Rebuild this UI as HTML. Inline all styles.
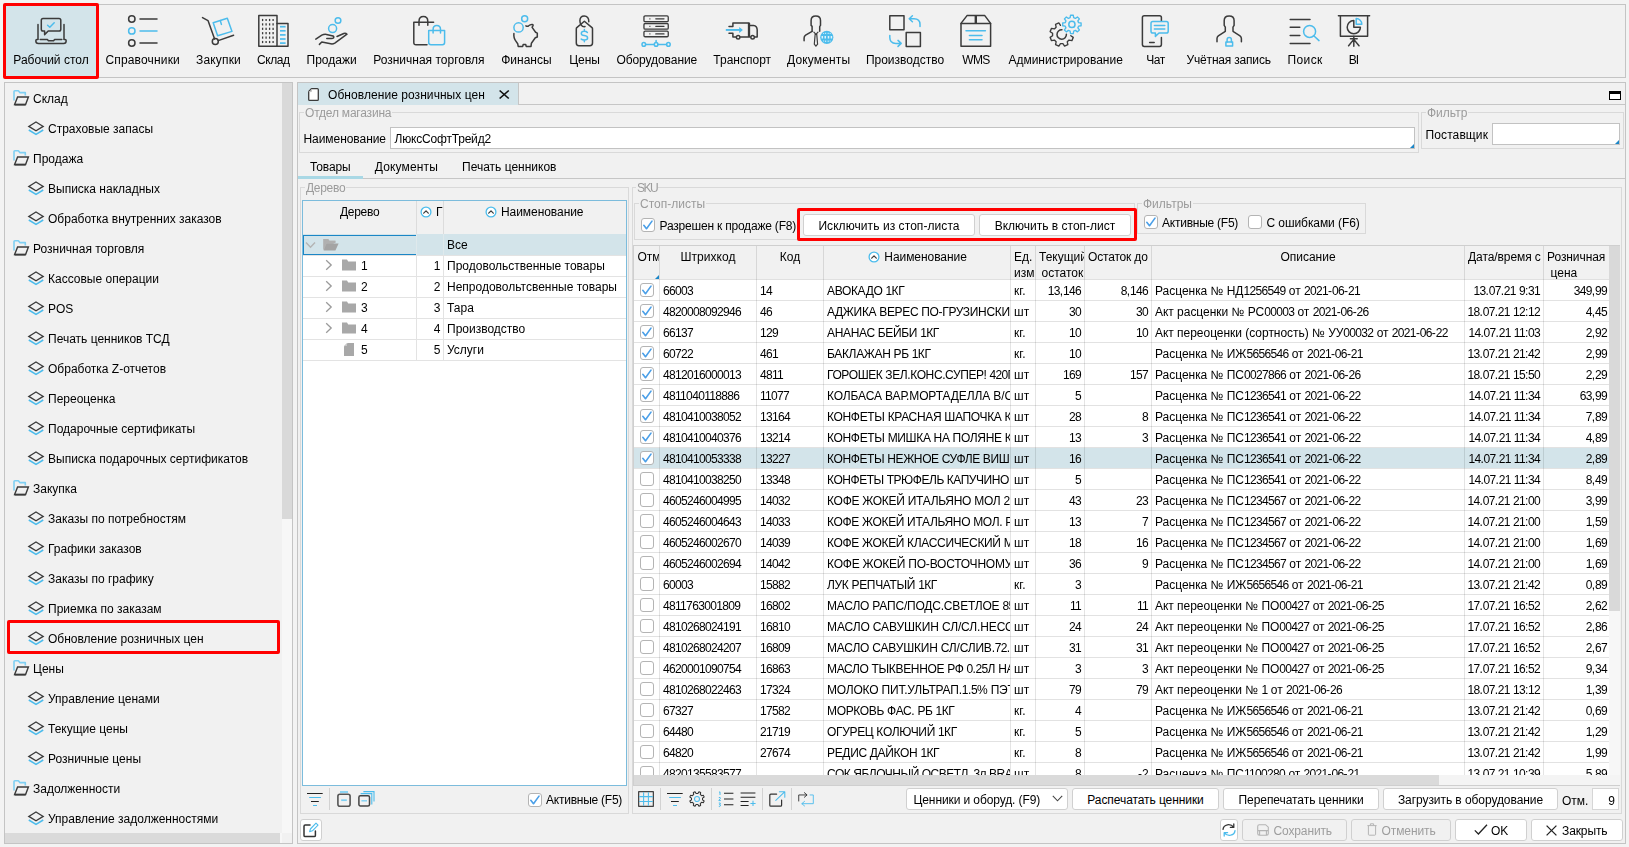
<!DOCTYPE html>
<html lang="ru"><head><meta charset="utf-8"><title>UI</title><style>
*{box-sizing:border-box;margin:0;padding:0}
html,body{width:1629px;height:847px;overflow:hidden;background:#f3f3f3}
body{font-family:"Liberation Sans",sans-serif;font-size:12px;color:#000;position:relative}
.a{position:absolute}
.t{position:absolute;white-space:nowrap;line-height:14px;height:14px}
.box{position:absolute;border:1px solid #c4c4c4;background:#f1f1f1}
.grp{position:absolute;border:1px solid #d9d9d9}
.gl{position:absolute;white-space:nowrap;line-height:14px;height:14px;color:#9b9b9b;background:#f1f1f1;padding:0 1px}
svg{position:absolute;overflow:visible}
.s{fill:none;stroke:#3b3b3b;stroke-width:1.5;stroke-linecap:round;stroke-linejoin:round}
.b{fill:none;stroke:#4cbcec;stroke-width:1.5;stroke-linecap:round;stroke-linejoin:round}
.cb{position:absolute;width:14px;height:14px;border:1px solid #b4b4b4;border-radius:3px;background:#fff}
.d{letter-spacing:-.67px}
.btn{position:absolute;border:1px solid #d0d0d0;border-radius:3px;background:#fff;text-align:center;white-space:nowrap}
</style></head><body>
<div class="box" style="left:4px;top:4px;width:1622px;height:74px"></div>
<div class="a" style="left:3px;top:3px;width:96px;height:76px;background:#d3e4ea;border:3px solid #ff0000;border-radius:2px"></div>
<svg style="left:35.0px;top:15px" width="32" height="32" viewBox="0 0 32 32"><path class="s" d="M3 9.5V24.3M29 9.5V24.3"/><path class="s" d="M2.8 24.6H2Q0.8 24.6 0.8 25.8Q0.8 28.6 3.4 28.6H28.6Q31.2 28.6 31.2 25.8Q31.2 24.6 30 24.6H29.2M5.2 24.6H12.4L13.4 25.8H18.6L19.6 24.6H26.8"/><path class="s" d="M8 3.4H24Q25.8 3.4 25.8 5.2V14.2Q25.8 16 24 16H13.2L9.6 19.6V16H8Q6.3 16 6.3 14.2V5.2Q6.3 3.4 8 3.4Z"/><path class="b" d="M12.6 10.2L14.8 12.2L19.2 7.8"/></svg><div class="t" style="left:-49.0px;top:53px;width:200px;text-align:center;letter-spacing:0.00px">Рабочий стол</div>
<svg style="left:126.6px;top:15px" width="32" height="32" viewBox="0 0 32 32"><circle class="s" cx="4.8" cy="4" r="3.2"/><path class="s" d="M13 4H30"/><circle class="b" cx="4.8" cy="15.9" r="3.2"/><path class="b" d="M13 15.9H30"/><circle class="s" cx="4.8" cy="28" r="3.2"/><path class="s" d="M13 28H30"/></svg><div class="t" style="left:42.7px;top:53px;width:200px;text-align:center;letter-spacing:0.17px">Справочники</div>
<svg style="left:202.4px;top:15px" width="32" height="32" viewBox="0 0 32 32"><path class="s" d="M0.5 2.6L6 5.6L12.6 24"/><circle class="s" cx="13.3" cy="26.6" r="3"/><path class="s" d="M16.2 25.6L31.6 20.3"/><path class="b" d="M11.2 7.8L25.3 3.3L30 16.4L15.6 20.8Z"/><path class="b" d="M18.3 5.6L19.4 9.4"/></svg><div class="t" style="left:118.5px;top:53px;width:200px;text-align:center;letter-spacing:0.15px">Закупки</div>
<svg style="left:257.6px;top:15px" width="32" height="32" viewBox="0 0 32 32"><path class="s" d="M0.8 0.6H19V31.3H0.8Z"/><path class="s" d="M19 8.4H30V31.3H19"/><path d="M4.6 3.9v2.2" stroke="#3b3b3b" stroke-width="1.3" fill="none"/><path d="M8.1 3.9v2.2" stroke="#3b3b3b" stroke-width="1.3" fill="none"/><path d="M11.6 3.9v2.2" stroke="#3b3b3b" stroke-width="1.3" fill="none"/><path d="M15.1 3.9v2.2" stroke="#3b3b3b" stroke-width="1.3" fill="none"/><path d="M4.6 8.3v2.2" stroke="#3b3b3b" stroke-width="1.3" fill="none"/><path d="M8.1 8.3v2.2" stroke="#3b3b3b" stroke-width="1.3" fill="none"/><path d="M11.6 8.3v2.2" stroke="#3b3b3b" stroke-width="1.3" fill="none"/><path d="M15.1 8.3v2.2" stroke="#3b3b3b" stroke-width="1.3" fill="none"/><path d="M4.6 12.7v2.2" stroke="#3b3b3b" stroke-width="1.3" fill="none"/><path d="M8.1 12.7v2.2" stroke="#3b3b3b" stroke-width="1.3" fill="none"/><path d="M11.6 12.7v2.2" stroke="#3b3b3b" stroke-width="1.3" fill="none"/><path d="M15.1 12.7v2.2" stroke="#3b3b3b" stroke-width="1.3" fill="none"/><path d="M4.6 17.1v2.2" stroke="#3b3b3b" stroke-width="1.3" fill="none"/><path d="M8.1 17.1v2.2" stroke="#3b3b3b" stroke-width="1.3" fill="none"/><path d="M11.6 17.1v2.2" stroke="#3b3b3b" stroke-width="1.3" fill="none"/><path d="M15.1 17.1v2.2" stroke="#3b3b3b" stroke-width="1.3" fill="none"/><path d="M4.6 21.5v2.2" stroke="#3b3b3b" stroke-width="1.3" fill="none"/><path d="M8.1 21.5v2.2" stroke="#3b3b3b" stroke-width="1.3" fill="none"/><path d="M11.6 21.5v2.2" stroke="#3b3b3b" stroke-width="1.3" fill="none"/><path d="M15.1 21.5v2.2" stroke="#3b3b3b" stroke-width="1.3" fill="none"/><path d="M4.6 25.9v2.2" stroke="#3b3b3b" stroke-width="1.3" fill="none"/><path d="M8.1 25.9v2.2" stroke="#3b3b3b" stroke-width="1.3" fill="none"/><path d="M11.6 25.9v2.2" stroke="#3b3b3b" stroke-width="1.3" fill="none"/><path d="M15.1 25.9v2.2" stroke="#3b3b3b" stroke-width="1.3" fill="none"/><path d="M22 11.7H27.6" stroke="#4cbcec" stroke-width="1.7" fill="none"/><path d="M22 15.8H27.6" stroke="#4cbcec" stroke-width="1.7" fill="none"/><path d="M22 19.9H27.6" stroke="#4cbcec" stroke-width="1.7" fill="none"/><path d="M22 24.0H27.6" stroke="#4cbcec" stroke-width="1.7" fill="none"/><path d="M22 28.1H27.6" stroke="#4cbcec" stroke-width="1.7" fill="none"/></svg><div class="t" style="left:173.4px;top:53px;width:200px;text-align:center;letter-spacing:-0.43px">Склад</div>
<svg style="left:315.6px;top:15px" width="32" height="32" viewBox="0 0 32 32"><circle class="b" cx="22" cy="5.5" r="2.85"/><circle class="b" cx="16.6" cy="13.6" r="4"/><path class="s" d="M-0.2 24.2L5.8 20.1Q8 19.1 10.5 19.4L17 21Q18.2 21.6 17.6 22.8Q17 23.6 15.6 23.6H10.8"/><path class="s" d="M21 21.5L27.8 18.5Q29.8 18 31 19.2L18.8 28.2Q17.4 29 16 29L5.8 27L3.4 29.4"/></svg><div class="t" style="left:231.6px;top:53px;width:200px;text-align:center;letter-spacing:0.00px">Продажи</div>
<svg style="left:412.9px;top:15px" width="32" height="32" viewBox="0 0 32 32"><path class="s" d="M14 29.8H3Q0.8 29.8 0.8 27.6V7.2H20.6"/><path class="s" d="M6 10.2V6.4Q6 1.6 10.4 1.6Q14.8 1.6 14.8 6.4V10.2"/><path class="b" d="M15.7 15.6H31.6V27.6Q31.6 29.8 29.4 29.8H17.9Q15.7 29.8 15.7 27.6Z"/><path class="b" d="M20.1 18V14.4Q20.1 10.6 23.8 10.6Q27.5 10.6 27.5 14.4V18"/></svg><div class="t" style="left:328.9px;top:53px;width:200px;text-align:center;letter-spacing:0.00px">Розничная торговля</div>
<svg style="left:510.4px;top:15px" width="32" height="32" viewBox="0 0 32 32"><circle class="b" cx="14.66" cy="3.7" r="3"/><circle class="b" cx="8.56" cy="12.46" r="4.65"/><path class="s" d="M15.9 10.8Q17.4 11.8 18.6 10.8Q20.4 9.2 22.3 9.4Q23.4 9.6 23 10.6L22.1 12.4L25.6 17.3L27.3 18.1V22L25.3 22.8L21.4 28.2L21 31.4H16.2L15.7 29.5H13.2L12.7 31.4H8.2L7.7 28.7Q4.4 24.4 4.1 22.4Q3.7 20.4 3.9 18.6"/></svg><div class="t" style="left:426.4px;top:53px;width:200px;text-align:center;letter-spacing:0.00px">Финансы</div>
<svg style="left:568.6px;top:15px" width="32" height="32" viewBox="0 0 32 32"><path class="s" d="M15.36 6.2L23 12.6Q23.5 13.1 23.5 13.8V28Q23.5 30.7 20.8 30.7H9.9Q7.3 30.7 7.3 28V13.8Q7.3 13.1 7.8 12.6Z"/><path class="s" d="M19.8 6.7C20 3 18 0.95 15.3 0.95C12.4 0.95 10.9 3.2 10.9 5.8C10.9 8.6 12.6 11.8 15.2 11.8L16 11.6"/><path class="b" d="M18.4 17.4Q17.4 16.2 15.3 16.2Q12.3 16.2 12.3 18.4Q12.3 20.2 15.3 20.6Q18.6 21 18.6 23Q18.6 25 15.3 25Q13 25 12.2 24M15.36 14.6V16.2M15.36 25V26.7"/></svg><div class="t" style="left:484.5px;top:53px;width:200px;text-align:center;letter-spacing:-0.13px">Цены</div>
<svg style="left:640.8px;top:15px" width="32" height="32" viewBox="0 0 32 32"><g style="stroke-width:1.3"><rect class="s" style="stroke-width:1.3" x="2.95" y="0.95" width="24.3" height="5.7" rx="1.2"/><rect class="s" style="stroke-width:1.3" x="2.95" y="8.5" width="24.3" height="5.7" rx="1.2"/><rect class="s" style="stroke-width:1.3" x="2.95" y="16.05" width="24.3" height="5.7" rx="1.2"/></g><path class="s" style="stroke-width:1.3" d="M14.8 3.8H23M14.8 11.35H23M14.8 18.9H23"/><path d="M8.4 3.8h1M8.4 11.35h1M8.4 18.9h1" stroke="#3b3b3b" stroke-width="1.2" fill="none"/><path class="b" d="M4.6 29.4H13.2M17 29.4H25.6M15.1 27.4V25.4"/><circle class="b" cx="2.8" cy="29.4" r="1.8"/><circle class="b" cx="15.1" cy="29.4" r="1.8"/><circle class="b" cx="27.4" cy="29.4" r="1.8"/></svg><div class="t" style="left:556.8px;top:53px;width:200px;text-align:center;letter-spacing:-0.07px">Оборудование</div>
<svg style="left:726.2px;top:15px" width="32" height="32" viewBox="0 0 32 32"><path class="s" d="M3 11.4H6.9V7.9H23M3 18.2H6.9V22H9.9M14.5 22H24.2M29 22H31.2V14.8Q31 10.6 27.6 10.4H23"/><path d="M23 7.9V22" stroke="#3b3b3b" stroke-width="2.3" fill="none"/><circle class="s" cx="12.13" cy="22.2" r="1.75"/><circle class="s" cx="26.6" cy="22.2" r="1.75"/><path d="M-0.2 14.95H14" stroke="#4cbcec" stroke-width="1.9" fill="none"/><path d="M13.2 11.9L16.9 14.95L13.2 18Z" fill="#4cbcec"/></svg><div class="t" style="left:642.2px;top:53px;width:200px;text-align:center;letter-spacing:0.00px">Транспорт</div>
<svg style="left:802.5px;top:15px" width="32" height="32" viewBox="0 0 32 32"><path class="s" d="M9.1 16.3V11.4L8.1 10.4V5.4Q8.1 0.9 12.8 0.9Q17.5 0.9 17.5 5.4V10.4L16.7 11.6V16.3"/><path class="s" d="M9.1 16.3L2.6 20.2Q1.1 21.2 1.1 23V25.7"/><path class="s" style="stroke-width:1.2" d="M10.9 17.2L12.9 19.4L15 17.2M12.2 18.8L11.3 29.2L12.9 31.2L14.6 29.2L13.7 18.8"/><circle cx="23.8" cy="22.3" r="6.6" fill="#4cbcec"/><path d="M19.3 21V23.6M22.25 21V23.6M25.5 21V23.6M28.4 21V23.6" stroke="#dff2fb" stroke-width="1.5" fill="none"/><path d="M20.6 18.1V19M22.6 17.7V19M25.2 17.7V19M27.2 18.1V19M20.6 25.6V26.5M22.6 25.6V26.9M25.2 25.6V26.9M27.2 25.6V26.5" stroke="#bfe6f8" stroke-width="1.2" fill="none"/></svg><div class="t" style="left:718.6px;top:53px;width:200px;text-align:center;letter-spacing:0.14px">Документы</div>
<svg style="left:889.0px;top:15px" width="32" height="32" viewBox="0 0 32 32"><rect class="s" x="0.8" y="0.8" width="14.2" height="14"/><rect class="s" x="17.2" y="17.4" width="14.2" height="14"/><path class="b" d="M31 11.6V9.6Q31 3.8 25 3.8H20.4M23.4 0.8L20.2 3.8L23.4 6.8"/><path class="b" d="M0.8 20.6V22.6Q0.8 28.4 6.8 28.4H12M9 25.4L12.2 28.4L9 31.4"/></svg><div class="t" style="left:805.0px;top:53px;width:200px;text-align:center;letter-spacing:0.00px">Производство</div>
<svg style="left:960.3px;top:15px" width="32" height="32" viewBox="0 0 32 32"><path class="s" d="M1 8.4H30.6V31.2H1Z"/><path class="s" d="M1 8.4L7 0.6H24.8L30.6 8.4"/><path d="M15.8 0.6V8.4" stroke="#3b3b3b" stroke-width="2.4" fill="none"/><path class="b" d="M6 15.8H25.4M9.4 20.4H22M9.4 24.8H22"/></svg><div class="t" style="left:876.0px;top:53px;width:200px;text-align:center;letter-spacing:-0.58px">WMS</div>
<svg style="left:1049.6px;top:15px" width="32" height="32" viewBox="0 0 32 32"><path class="s" style="stroke-width:1.35" d="M20.82 20.72L23.25 22.37L21.89 25.64L19.01 25.08L17.28 26.81L17.84 29.69L14.57 31.05L12.92 28.62L10.48 28.62L8.83 31.05L5.56 29.69L6.12 26.81L4.39 25.08L1.51 25.64L0.15 22.37L2.58 20.72L2.58 18.28L0.15 16.63L1.51 13.36L4.39 13.92L6.12 12.19L5.56 9.31L8.83 7.95L10.48 10.38"/><path class="s" d="M11.95 14.81A4.7 4.7 0 1 0 16.39 19.25"/><path class="b" style="stroke-width:1.35" d="M28.57 7.63L31.10 8.02L31.10 10.78L28.57 11.17L27.87 12.87L29.38 14.93L27.43 16.88L25.37 15.37L23.67 16.07L23.28 18.60L20.52 18.60L20.13 16.07L18.43 15.37L16.37 16.88L14.42 14.93L15.93 12.87L15.23 11.17L12.70 10.78L12.70 8.02L15.23 7.63L15.93 5.93L14.42 3.87L16.37 1.92L18.43 3.43L20.13 2.73L20.52 0.20L23.28 0.20L23.67 2.73L25.37 3.43L27.43 1.92L29.38 3.87L27.87 5.93Z"/><circle class="b" cx="21.9" cy="9.4" r="3.1"/></svg><div class="t" style="left:965.6px;top:53px;width:200px;text-align:center;letter-spacing:0.00px">Администрирование</div>
<svg style="left:1139.8px;top:15px" width="32" height="32" viewBox="0 0 32 32"><path class="s" d="M21.4 6V2.6Q21.4 0.8 19.6 0.8H4.2Q2.4 0.8 2.4 2.6V29.6Q2.4 31.4 4.2 31.4H19.6Q21.4 31.4 21.4 29.6V22.6"/><path class="s" d="M9.6 27.4H14.2"/><path class="b" d="M12.8 6.4H26.4Q28.2 6.4 28.2 8.2V16.2Q28.2 18 26.4 18H19L15.4 21.4V18H12.8Q11 18 11 16.2V8.2Q11 6.4 12.8 6.4Z"/><path class="b" d="M14.4 10.6H24.8M14.4 14H24.8"/></svg><div class="t" style="left:1055.6px;top:53px;width:200px;text-align:center;letter-spacing:-0.44px">Чат</div>
<svg style="left:1212.8px;top:15px" width="32" height="32" viewBox="0 0 32 32"><path class="s" d="M12.3 16.3V12.1L11.2 10.4V5.6Q11.2 0.9 16.15 0.9Q21.1 0.9 21.1 5.6V10.4L20 12.1V16.3L27 20.8Q28.4 21.8 28.4 23.6V26.7M12.3 16.3L5.3 20.8Q4 21.8 4 23.6V26.7"/><rect class="b" x="12.9" y="27.1" width="6.7" height="3.9"/><path class="b" d="M14.1 27V24.8Q14.1 22.6 16.25 22.6Q18.4 22.6 18.4 24.8V27"/></svg><div class="t" style="left:1128.7px;top:53px;width:200px;text-align:center;letter-spacing:-0.19px">Учётная запись</div>
<svg style="left:1288.9px;top:15px" width="32" height="32" viewBox="0 0 32 32"><path class="s" d="M1.2 4.4H21M1.2 12.3H10.8M1.2 20.6H10.8M1.2 28.4H21"/><circle class="b" cx="20.6" cy="16.4" r="6"/><path class="b" d="M25 21L30 25.6"/></svg><div class="t" style="left:1205.1px;top:53px;width:200px;text-align:center;letter-spacing:0.35px">Поиск</div>
<svg style="left:1338.0px;top:15px" width="32" height="32" viewBox="0 0 32 32"><path class="s" d="M0.4 0.8H31.6M2.4 0.8V21.2H29.6V0.8"/><path class="s" d="M15.8 5.6A6.6 6.6 0 1 0 22.4 12.2H15.8Z"/><path class="b" d="M18.2 3.6A5.6 5.6 0 0 1 23.8 9.2H18.2Z"/><path class="s" d="M15.8 21.2V31.2M12.4 23.8H19.2M15.8 24.4L10.6 30.8M15.8 24.4L21 30.8"/></svg><div class="t" style="left:1253.5px;top:53px;width:200px;text-align:center;letter-spacing:-1.00px">BI</div>
<div class="box" style="left:4px;top:82px;width:289px;height:762px"></div>
<div class="a" style="left:282px;top:83px;width:10px;height:750px;background:#f7f7f7"></div><div class="a" style="left:282px;top:83px;width:10px;height:436px;background:#d9d9d9"></div><div class="a" style="left:5px;top:833px;width:277px;height:10px;background:#f7f7f7"></div><div class="a" style="left:5px;top:833px;width:275px;height:10px;background:#dadada"></div>
<svg style="left:13px;top:90px" width="16" height="16" viewBox="0 0 16 16"><path d="M1 10.6V1.6Q1 0.8 1.8 0.8H5.4L6.8 2.6H12.3V5.6" fill="none" stroke="#7fd0f3" stroke-width="1.6" stroke-linejoin="round"/><path d="M4.6 7H15.4L12.6 14.6H1.6Z" fill="none" stroke="#3b3b3b" stroke-width="1.4" stroke-linejoin="miter"/><path d="M1.6 14.6H12.6" stroke="#3b3b3b" stroke-width="1.9" fill="none"/></svg><div class="t" style="left:33px;top:92px">Склад</div>
<svg style="left:28px;top:121px" width="16" height="14" viewBox="0 0 16 14"><path d="M8 1L15.2 5.4L8 9.8L0.8 5.4Z" fill="none" stroke="#3b3b3b" stroke-width="1.3" stroke-linejoin="miter"/><path d="M0.8 9L8 13.4L15.2 9" fill="none" stroke="#4cbcec" stroke-width="1.5" stroke-linejoin="miter" stroke-linecap="butt"/></svg><div class="t" style="left:48px;top:122px">Страховые запасы</div>
<svg style="left:13px;top:150px" width="16" height="16" viewBox="0 0 16 16"><path d="M1 10.6V1.6Q1 0.8 1.8 0.8H5.4L6.8 2.6H12.3V5.6" fill="none" stroke="#7fd0f3" stroke-width="1.6" stroke-linejoin="round"/><path d="M4.6 7H15.4L12.6 14.6H1.6Z" fill="none" stroke="#3b3b3b" stroke-width="1.4" stroke-linejoin="miter"/><path d="M1.6 14.6H12.6" stroke="#3b3b3b" stroke-width="1.9" fill="none"/></svg><div class="t" style="left:33px;top:152px">Продажа</div>
<svg style="left:28px;top:181px" width="16" height="14" viewBox="0 0 16 14"><path d="M8 1L15.2 5.4L8 9.8L0.8 5.4Z" fill="none" stroke="#3b3b3b" stroke-width="1.3" stroke-linejoin="miter"/><path d="M0.8 9L8 13.4L15.2 9" fill="none" stroke="#4cbcec" stroke-width="1.5" stroke-linejoin="miter" stroke-linecap="butt"/></svg><div class="t" style="left:48px;top:182px">Выписка накладных</div>
<svg style="left:28px;top:211px" width="16" height="14" viewBox="0 0 16 14"><path d="M8 1L15.2 5.4L8 9.8L0.8 5.4Z" fill="none" stroke="#3b3b3b" stroke-width="1.3" stroke-linejoin="miter"/><path d="M0.8 9L8 13.4L15.2 9" fill="none" stroke="#4cbcec" stroke-width="1.5" stroke-linejoin="miter" stroke-linecap="butt"/></svg><div class="t" style="left:48px;top:212px">Обработка внутренних заказов</div>
<svg style="left:13px;top:240px" width="16" height="16" viewBox="0 0 16 16"><path d="M1 10.6V1.6Q1 0.8 1.8 0.8H5.4L6.8 2.6H12.3V5.6" fill="none" stroke="#7fd0f3" stroke-width="1.6" stroke-linejoin="round"/><path d="M4.6 7H15.4L12.6 14.6H1.6Z" fill="none" stroke="#3b3b3b" stroke-width="1.4" stroke-linejoin="miter"/><path d="M1.6 14.6H12.6" stroke="#3b3b3b" stroke-width="1.9" fill="none"/></svg><div class="t" style="left:33px;top:242px">Розничная торговля</div>
<svg style="left:28px;top:271px" width="16" height="14" viewBox="0 0 16 14"><path d="M8 1L15.2 5.4L8 9.8L0.8 5.4Z" fill="none" stroke="#3b3b3b" stroke-width="1.3" stroke-linejoin="miter"/><path d="M0.8 9L8 13.4L15.2 9" fill="none" stroke="#4cbcec" stroke-width="1.5" stroke-linejoin="miter" stroke-linecap="butt"/></svg><div class="t" style="left:48px;top:272px">Кассовые операции</div>
<svg style="left:28px;top:301px" width="16" height="14" viewBox="0 0 16 14"><path d="M8 1L15.2 5.4L8 9.8L0.8 5.4Z" fill="none" stroke="#3b3b3b" stroke-width="1.3" stroke-linejoin="miter"/><path d="M0.8 9L8 13.4L15.2 9" fill="none" stroke="#4cbcec" stroke-width="1.5" stroke-linejoin="miter" stroke-linecap="butt"/></svg><div class="t" style="left:48px;top:302px">POS</div>
<svg style="left:28px;top:331px" width="16" height="14" viewBox="0 0 16 14"><path d="M8 1L15.2 5.4L8 9.8L0.8 5.4Z" fill="none" stroke="#3b3b3b" stroke-width="1.3" stroke-linejoin="miter"/><path d="M0.8 9L8 13.4L15.2 9" fill="none" stroke="#4cbcec" stroke-width="1.5" stroke-linejoin="miter" stroke-linecap="butt"/></svg><div class="t" style="left:48px;top:332px">Печать ценников ТСД</div>
<svg style="left:28px;top:361px" width="16" height="14" viewBox="0 0 16 14"><path d="M8 1L15.2 5.4L8 9.8L0.8 5.4Z" fill="none" stroke="#3b3b3b" stroke-width="1.3" stroke-linejoin="miter"/><path d="M0.8 9L8 13.4L15.2 9" fill="none" stroke="#4cbcec" stroke-width="1.5" stroke-linejoin="miter" stroke-linecap="butt"/></svg><div class="t" style="left:48px;top:362px">Обработка Z-отчетов</div>
<svg style="left:28px;top:391px" width="16" height="14" viewBox="0 0 16 14"><path d="M8 1L15.2 5.4L8 9.8L0.8 5.4Z" fill="none" stroke="#3b3b3b" stroke-width="1.3" stroke-linejoin="miter"/><path d="M0.8 9L8 13.4L15.2 9" fill="none" stroke="#4cbcec" stroke-width="1.5" stroke-linejoin="miter" stroke-linecap="butt"/></svg><div class="t" style="left:48px;top:392px">Переоценка</div>
<svg style="left:28px;top:421px" width="16" height="14" viewBox="0 0 16 14"><path d="M8 1L15.2 5.4L8 9.8L0.8 5.4Z" fill="none" stroke="#3b3b3b" stroke-width="1.3" stroke-linejoin="miter"/><path d="M0.8 9L8 13.4L15.2 9" fill="none" stroke="#4cbcec" stroke-width="1.5" stroke-linejoin="miter" stroke-linecap="butt"/></svg><div class="t" style="left:48px;top:422px">Подарочные сертификаты</div>
<svg style="left:28px;top:451px" width="16" height="14" viewBox="0 0 16 14"><path d="M8 1L15.2 5.4L8 9.8L0.8 5.4Z" fill="none" stroke="#3b3b3b" stroke-width="1.3" stroke-linejoin="miter"/><path d="M0.8 9L8 13.4L15.2 9" fill="none" stroke="#4cbcec" stroke-width="1.5" stroke-linejoin="miter" stroke-linecap="butt"/></svg><div class="t" style="left:48px;top:452px">Выписка подарочных сертификатов</div>
<svg style="left:13px;top:480px" width="16" height="16" viewBox="0 0 16 16"><path d="M1 10.6V1.6Q1 0.8 1.8 0.8H5.4L6.8 2.6H12.3V5.6" fill="none" stroke="#7fd0f3" stroke-width="1.6" stroke-linejoin="round"/><path d="M4.6 7H15.4L12.6 14.6H1.6Z" fill="none" stroke="#3b3b3b" stroke-width="1.4" stroke-linejoin="miter"/><path d="M1.6 14.6H12.6" stroke="#3b3b3b" stroke-width="1.9" fill="none"/></svg><div class="t" style="left:33px;top:482px">Закупка</div>
<svg style="left:28px;top:511px" width="16" height="14" viewBox="0 0 16 14"><path d="M8 1L15.2 5.4L8 9.8L0.8 5.4Z" fill="none" stroke="#3b3b3b" stroke-width="1.3" stroke-linejoin="miter"/><path d="M0.8 9L8 13.4L15.2 9" fill="none" stroke="#4cbcec" stroke-width="1.5" stroke-linejoin="miter" stroke-linecap="butt"/></svg><div class="t" style="left:48px;top:512px">Заказы по потребностям</div>
<svg style="left:28px;top:541px" width="16" height="14" viewBox="0 0 16 14"><path d="M8 1L15.2 5.4L8 9.8L0.8 5.4Z" fill="none" stroke="#3b3b3b" stroke-width="1.3" stroke-linejoin="miter"/><path d="M0.8 9L8 13.4L15.2 9" fill="none" stroke="#4cbcec" stroke-width="1.5" stroke-linejoin="miter" stroke-linecap="butt"/></svg><div class="t" style="left:48px;top:542px">Графики заказов</div>
<svg style="left:28px;top:571px" width="16" height="14" viewBox="0 0 16 14"><path d="M8 1L15.2 5.4L8 9.8L0.8 5.4Z" fill="none" stroke="#3b3b3b" stroke-width="1.3" stroke-linejoin="miter"/><path d="M0.8 9L8 13.4L15.2 9" fill="none" stroke="#4cbcec" stroke-width="1.5" stroke-linejoin="miter" stroke-linecap="butt"/></svg><div class="t" style="left:48px;top:572px">Заказы по графику</div>
<svg style="left:28px;top:601px" width="16" height="14" viewBox="0 0 16 14"><path d="M8 1L15.2 5.4L8 9.8L0.8 5.4Z" fill="none" stroke="#3b3b3b" stroke-width="1.3" stroke-linejoin="miter"/><path d="M0.8 9L8 13.4L15.2 9" fill="none" stroke="#4cbcec" stroke-width="1.5" stroke-linejoin="miter" stroke-linecap="butt"/></svg><div class="t" style="left:48px;top:602px">Приемка по заказам</div>
<svg style="left:28px;top:631px" width="16" height="14" viewBox="0 0 16 14"><path d="M8 1L15.2 5.4L8 9.8L0.8 5.4Z" fill="none" stroke="#3b3b3b" stroke-width="1.3" stroke-linejoin="miter"/><path d="M0.8 9L8 13.4L15.2 9" fill="none" stroke="#4cbcec" stroke-width="1.5" stroke-linejoin="miter" stroke-linecap="butt"/></svg><div class="t" style="left:48px;top:632px">Обновление розничных цен</div>
<svg style="left:13px;top:660px" width="16" height="16" viewBox="0 0 16 16"><path d="M1 10.6V1.6Q1 0.8 1.8 0.8H5.4L6.8 2.6H12.3V5.6" fill="none" stroke="#7fd0f3" stroke-width="1.6" stroke-linejoin="round"/><path d="M4.6 7H15.4L12.6 14.6H1.6Z" fill="none" stroke="#3b3b3b" stroke-width="1.4" stroke-linejoin="miter"/><path d="M1.6 14.6H12.6" stroke="#3b3b3b" stroke-width="1.9" fill="none"/></svg><div class="t" style="left:33px;top:662px">Цены</div>
<svg style="left:28px;top:691px" width="16" height="14" viewBox="0 0 16 14"><path d="M8 1L15.2 5.4L8 9.8L0.8 5.4Z" fill="none" stroke="#3b3b3b" stroke-width="1.3" stroke-linejoin="miter"/><path d="M0.8 9L8 13.4L15.2 9" fill="none" stroke="#4cbcec" stroke-width="1.5" stroke-linejoin="miter" stroke-linecap="butt"/></svg><div class="t" style="left:48px;top:692px">Управление ценами</div>
<svg style="left:28px;top:721px" width="16" height="14" viewBox="0 0 16 14"><path d="M8 1L15.2 5.4L8 9.8L0.8 5.4Z" fill="none" stroke="#3b3b3b" stroke-width="1.3" stroke-linejoin="miter"/><path d="M0.8 9L8 13.4L15.2 9" fill="none" stroke="#4cbcec" stroke-width="1.5" stroke-linejoin="miter" stroke-linecap="butt"/></svg><div class="t" style="left:48px;top:722px">Текущие цены</div>
<svg style="left:28px;top:751px" width="16" height="14" viewBox="0 0 16 14"><path d="M8 1L15.2 5.4L8 9.8L0.8 5.4Z" fill="none" stroke="#3b3b3b" stroke-width="1.3" stroke-linejoin="miter"/><path d="M0.8 9L8 13.4L15.2 9" fill="none" stroke="#4cbcec" stroke-width="1.5" stroke-linejoin="miter" stroke-linecap="butt"/></svg><div class="t" style="left:48px;top:752px">Розничные цены</div>
<svg style="left:13px;top:780px" width="16" height="16" viewBox="0 0 16 16"><path d="M1 10.6V1.6Q1 0.8 1.8 0.8H5.4L6.8 2.6H12.3V5.6" fill="none" stroke="#7fd0f3" stroke-width="1.6" stroke-linejoin="round"/><path d="M4.6 7H15.4L12.6 14.6H1.6Z" fill="none" stroke="#3b3b3b" stroke-width="1.4" stroke-linejoin="miter"/><path d="M1.6 14.6H12.6" stroke="#3b3b3b" stroke-width="1.9" fill="none"/></svg><div class="t" style="left:33px;top:782px">Задолженности</div>
<svg style="left:28px;top:811px" width="16" height="14" viewBox="0 0 16 14"><path d="M8 1L15.2 5.4L8 9.8L0.8 5.4Z" fill="none" stroke="#3b3b3b" stroke-width="1.3" stroke-linejoin="miter"/><path d="M0.8 9L8 13.4L15.2 9" fill="none" stroke="#4cbcec" stroke-width="1.5" stroke-linejoin="miter" stroke-linecap="butt"/></svg><div class="t" style="left:48px;top:812px">Управление задолженностями</div>
<div class="a" style="left:7px;top:620px;width:273px;height:34px;border:3px solid #ff0000;border-radius:2px"></div>
<div class="box" style="left:297px;top:82px;width:1329px;height:762px"></div>
<div class="a" style="left:518px;top:104px;width:1107px;height:1px;background:#c6c6c6"></div><div class="a" style="left:298px;top:83px;width:221px;height:22px;background:#d3e4ea;border-right:1px solid #c6c6c6"></div><svg style="left:308px;top:88px" width="11" height="13" viewBox="0 0 11 13"><path d="M3.4 0.7H9.4Q10.3 0.7 10.3 1.6V11.4Q10.3 12.3 9.4 12.3H1.6Q0.7 12.3 0.7 11.4V3.4Z" fill="#fff" stroke="#3b3b3b" stroke-width="1.3" stroke-linejoin="round"/><path d="M0.7 3.6H3.4V0.9" fill="none" stroke="#bdbdbd" stroke-width="1"/></svg><div class="t" style="left:328px;top:87.5px;letter-spacing:0.06px">Обновление розничных цен</div><svg style="left:499px;top:90.3px" width="10.4" height="9" viewBox="0 0 10 10" preserveAspectRatio="none"><path d="M0.6 0.6L9.4 9.4M9.4 0.6L0.6 9.4" stroke="#111" stroke-width="1.5" fill="none"/></svg>
<div class="a" style="left:1609px;top:91px;width:12px;height:9px;border:1px solid #000;border-top:3px solid #000;background:#fff"></div>
<div class="grp" style="left:299px;top:112px;width:1120px;height:41px"></div><div class="gl" style="left:304px;top:105.5px;letter-spacing:-0.20px">Отдел магазина</div><div class="t" style="left:303.5px;top:131.5px;letter-spacing:-0.06px">Наименование</div><div class="a" style="left:390px;top:127px;width:1025px;height:22px;background:#fff;border:1px solid #c2c2c2"></div><div class="t" style="left:394.5px;top:131.5px;letter-spacing:-0.19px">ЛюксСофтТрейд2</div><svg style="left:1410px;top:144px" width="4" height="4" viewBox="0 0 4 4"><path d="M4 0V4H0Z" fill="#1a86c8"/></svg><div class="grp" style="left:1421px;top:112px;width:203px;height:37px"></div><div class="gl" style="left:1426px;top:105.5px">Фильтр</div><div class="t" style="left:1425.5px;top:128px;letter-spacing:0.11px">Поставщик</div><div class="a" style="left:1492px;top:123px;width:128px;height:22px;background:#fff;border:1px solid #c2c2c2"></div><svg style="left:1615px;top:140px" width="4" height="4" viewBox="0 0 4 4"><path d="M4 0V4H0Z" fill="#1a86c8"/></svg>
<div class="t" style="left:310px;top:160px;letter-spacing:-0.13px">Товары</div><div class="t" style="left:374.8px;top:160px;letter-spacing:0.14px">Документы</div><div class="t" style="left:462px;top:160px">Печать ценников</div><div class="a" style="left:298px;top:178px;width:1327px;height:1px;background:#c6c6c6"></div><div class="a" style="left:298px;top:176px;width:65px;height:3px;background:#a9d8e5"></div>
<div class="grp" style="left:300px;top:187px;width:329px;height:627px"></div><div class="gl" style="left:305px;top:180.5px;letter-spacing:-0.29px">Дерево</div><div class="a" style="left:302px;top:200px;width:325px;height:586px;background:#fff;border:1px solid #7cbcdc"></div><div class="a" style="left:303px;top:201px;width:323px;height:33px;background:#f1f1f1"></div><div class="a" style="left:416px;top:201px;width:1px;height:33px;background:#dcdcdc"></div><div class="a" style="left:443px;top:201px;width:1px;height:33px;background:#dcdcdc"></div><div class="t" style="left:340px;top:205px;letter-spacing:-0.29px">Дерево</div><svg style="left:420.0px;top:205.5px" width="12" height="12" viewBox="0 0 12 12"><circle cx="6" cy="6" r="4.9" fill="#fff" stroke="#4cbcec" stroke-width="1.3"/><path d="M3.7 7.2L6 4.8L8.3 7.2" fill="none" stroke="#3b3b3b" stroke-width="1.2" stroke-linecap="round" stroke-linejoin="round"/></svg><div class="a" style="left:435px;top:205px;width:8px;height:14px;overflow:hidden"><div class="t" style="left:1px;top:0">Г</div></div><svg style="left:485.0px;top:205.5px" width="12" height="12" viewBox="0 0 12 12"><circle cx="6" cy="6" r="4.9" fill="#fff" stroke="#4cbcec" stroke-width="1.3"/><path d="M3.7 7.2L6 4.8L8.3 7.2" fill="none" stroke="#3b3b3b" stroke-width="1.2" stroke-linecap="round" stroke-linejoin="round"/></svg><div class="t" style="left:501px;top:205px;letter-spacing:-0.06px">Наименование</div>
<div class="a" style="left:303px;top:234px;width:323px;height:21px;background:#d3e4ea"></div><div class="a" style="left:303px;top:255px;width:323px;height:1px;background:#e3e3e3"></div><div class="a" style="left:416px;top:234px;width:1px;height:21px;background:#dfe9ec"></div><div class="a" style="left:443px;top:234px;width:1px;height:21px;background:#dfe9ec"></div><div class="t" style="left:447px;top:238px">Все</div>
<div class="a" style="left:303px;top:276px;width:323px;height:1px;background:#e3e3e3"></div><div class="a" style="left:416px;top:255px;width:1px;height:21px;background:#e3e3e3"></div><div class="a" style="left:443px;top:255px;width:1px;height:21px;background:#e3e3e3"></div><div class="t" style="left:447px;top:259px">Продовольственные товары</div><div class="t" style="left:400px;top:259px;width:40.5px;text-align:right">1</div><div class="t" style="left:361px;top:259px">1</div><svg style="left:325px;top:259px" width="8" height="12" viewBox="0 0 8 12"><path d="M1.2 1.2L6.2 6L1.2 10.8" fill="none" stroke="#9a9a9a" stroke-width="1.3"/></svg><svg style="left:342px;top:259px" width="14" height="12" viewBox="0 0 14 12"><path d="M0 0.6H5L6.2 2.4H14V11.6H0Z" fill="#a8a8a8"/></svg>
<div class="a" style="left:303px;top:297px;width:323px;height:1px;background:#e3e3e3"></div><div class="a" style="left:416px;top:276px;width:1px;height:21px;background:#e3e3e3"></div><div class="a" style="left:443px;top:276px;width:1px;height:21px;background:#e3e3e3"></div><div class="t" style="left:447px;top:280px">Непродовольтсвенные товары</div><div class="t" style="left:400px;top:280px;width:40.5px;text-align:right">2</div><div class="t" style="left:361px;top:280px">2</div><svg style="left:325px;top:280px" width="8" height="12" viewBox="0 0 8 12"><path d="M1.2 1.2L6.2 6L1.2 10.8" fill="none" stroke="#9a9a9a" stroke-width="1.3"/></svg><svg style="left:342px;top:280px" width="14" height="12" viewBox="0 0 14 12"><path d="M0 0.6H5L6.2 2.4H14V11.6H0Z" fill="#a8a8a8"/></svg>
<div class="a" style="left:303px;top:318px;width:323px;height:1px;background:#e3e3e3"></div><div class="a" style="left:416px;top:297px;width:1px;height:21px;background:#e3e3e3"></div><div class="a" style="left:443px;top:297px;width:1px;height:21px;background:#e3e3e3"></div><div class="t" style="left:447px;top:301px">Тара</div><div class="t" style="left:400px;top:301px;width:40.5px;text-align:right">3</div><div class="t" style="left:361px;top:301px">3</div><svg style="left:325px;top:301px" width="8" height="12" viewBox="0 0 8 12"><path d="M1.2 1.2L6.2 6L1.2 10.8" fill="none" stroke="#9a9a9a" stroke-width="1.3"/></svg><svg style="left:342px;top:301px" width="14" height="12" viewBox="0 0 14 12"><path d="M0 0.6H5L6.2 2.4H14V11.6H0Z" fill="#a8a8a8"/></svg>
<div class="a" style="left:303px;top:339px;width:323px;height:1px;background:#e3e3e3"></div><div class="a" style="left:416px;top:318px;width:1px;height:21px;background:#e3e3e3"></div><div class="a" style="left:443px;top:318px;width:1px;height:21px;background:#e3e3e3"></div><div class="t" style="left:447px;top:322px">Производство</div><div class="t" style="left:400px;top:322px;width:40.5px;text-align:right">4</div><div class="t" style="left:361px;top:322px">4</div><svg style="left:325px;top:322px" width="8" height="12" viewBox="0 0 8 12"><path d="M1.2 1.2L6.2 6L1.2 10.8" fill="none" stroke="#9a9a9a" stroke-width="1.3"/></svg><svg style="left:342px;top:322px" width="14" height="12" viewBox="0 0 14 12"><path d="M0 0.6H5L6.2 2.4H14V11.6H0Z" fill="#a8a8a8"/></svg>
<div class="a" style="left:303px;top:360px;width:323px;height:1px;background:#e3e3e3"></div><div class="a" style="left:416px;top:339px;width:1px;height:21px;background:#e3e3e3"></div><div class="a" style="left:443px;top:339px;width:1px;height:21px;background:#e3e3e3"></div><div class="t" style="left:447px;top:343px">Услуги</div><div class="t" style="left:400px;top:343px;width:40.5px;text-align:right">5</div><div class="t" style="left:361px;top:343px">5</div><svg style="left:344px;top:343px" width="10" height="13" viewBox="0 0 10 13"><path d="M3.6 0H10V13H0V3.6Z" fill="#a8a8a8"/><path d="M0 3H3V0Z" fill="#c8c8c8"/></svg>
<div class="a" style="left:303px;top:235px;width:113px;height:20px;border:1px solid #1b86c6;border-right:none"></div><svg style="left:305px;top:241px" width="11" height="8" viewBox="0 0 11 8"><path d="M1 1.4L5.5 6.2L10 1.4" fill="none" stroke="#b4b4b4" stroke-width="1.4"/></svg><svg style="left:323px;top:238px" width="16" height="13" viewBox="0 0 16 13"><path d="M0.4 12V1H5.2L6.4 2.8H12.4V4.6" fill="#b6b6b6" stroke="none"/><path d="M0.4 1H5.2L6.4 2.8H12.4V5H3.4L0.4 12Z" fill="#b0b0b0"/><path d="M3.6 5.4H15.6L12.4 12.4H0.6Z" fill="#a4a4a4"/></svg>
<svg style="left:307px;top:793px" width="16" height="13" viewBox="0 0 16 13"><path d="M0 0.5H15.7M4 8.5H11.8" stroke="#222" stroke-width="1" fill="none"/><path d="M2.2 4.5H13.9M6 12.5H10" stroke="#4cbcec" stroke-width="1" fill="none"/></svg><div class="a" style="left:329px;top:788px;width:1px;height:22px;background:#d2d2d2"></div><svg style="left:337px;top:791px" width="14" height="16" viewBox="0 0 14 16"><path d="M3 1H11" stroke="#7fd0f3" stroke-width="1.8" fill="none"/><rect x="0.9" y="3.2" width="12.2" height="12" rx="2" fill="none" stroke="#555" stroke-width="1.6"/><path d="M4.2 9.2H9.8" stroke="#7fd0f3" stroke-width="1.7" fill="none"/></svg><svg style="left:358px;top:791px" width="17" height="16" viewBox="0 0 17 16"><path d="M5.4 0.6H16V10.6M2.6 2.6H13.8V13.4" stroke="#4cbcec" stroke-width="1.1" fill="none"/><rect x="0.9" y="4.7" width="10.6" height="10.2" rx="1.5" fill="#f1f1f1" stroke="#444" stroke-width="1.5"/><path d="M3.4 9.8H9" stroke="#7fd0f3" stroke-width="1.4" fill="none"/></svg><div class="cb" style="left:528.0px;top:792.5px;width:14px;height:14px"></div><svg style="left:528.0px;top:792.5px" width="14" height="14" viewBox="0 0 14 14"><path d="M2.8 7.3L5.5 10.7L11 3.1" fill="none" stroke="#4a9fe8" stroke-width="1.6" stroke-linecap="round" stroke-linejoin="round"/></svg><div class="t" style="left:546px;top:792.5px;letter-spacing:-0.24px">Активные (F5)</div>
<div class="btn" style="left:300px;top:819px;width:22px;height:22px"></div><svg style="left:303px;top:822px" width="16" height="16" viewBox="0 0 16 16"><path d="M7 3H2.2Q1 3 1 4.2V13.4Q1 14.6 2.2 14.6H11.2Q12.4 14.6 12.4 13.4V9" fill="none" stroke="#333" stroke-width="1.5" stroke-linecap="round"/><path d="M6.6 9.6L7.4 7L13 1.2L15 3.2L9.4 8.8Z" fill="none" stroke="#4cbcec" stroke-width="1.1" stroke-linejoin="round"/></svg>
<div class="grp" style="left:632px;top:187px;width:990px;height:627px"></div><div class="gl" style="left:636px;top:180.5px;letter-spacing:-1.50px">SKU</div><div class="grp" style="left:634px;top:203px;width:501px;height:37px"></div><div class="gl" style="left:639px;top:196.5px">Стоп-листы</div><div class="cb" style="left:641.0px;top:218.0px;width:14px;height:14px"></div><svg style="left:641.0px;top:218.0px" width="14" height="14" viewBox="0 0 14 14"><path d="M2.8 7.3L5.5 10.7L11 3.1" fill="none" stroke="#4a9fe8" stroke-width="1.6" stroke-linecap="round" stroke-linejoin="round"/></svg><div class="t" style="left:659.5px;top:218.5px;letter-spacing:-0.20px">Разрешен к продаже (F8)</div><div class="btn" style="left:803px;top:214px;width:172px;height:22px;line-height:20px;padding-top:0.5px;letter-spacing:0.07px">Исключить из стоп-листа</div><div class="btn" style="left:979px;top:214px;width:152px;height:22px;line-height:20px;padding-top:0.5px">Включить в стоп-лист</div><div class="grp" style="left:1137px;top:203px;width:229px;height:31px"></div><div class="gl" style="left:1142px;top:196.5px">Фильтры</div><div class="cb" style="left:1144.0px;top:215.0px;width:14px;height:14px"></div><svg style="left:1144.0px;top:215.0px" width="14" height="14" viewBox="0 0 14 14"><path d="M2.8 7.3L5.5 10.7L11 3.1" fill="none" stroke="#4a9fe8" stroke-width="1.6" stroke-linecap="round" stroke-linejoin="round"/></svg><div class="t" style="left:1162px;top:216px;letter-spacing:-0.24px">Активные (F5)</div><div class="cb" style="left:1248.0px;top:215.0px;width:14px;height:14px"></div><div class="t" style="left:1266.5px;top:216px;letter-spacing:-0.08px">С ошибками (F6)</div><div class="a" style="left:797px;top:208px;width:340px;height:33px;border:3px solid #ff0000;border-radius:2px"></div>
<div class="a" style="left:633px;top:245px;width:987px;height:541px;background:#fff;border:1px solid #cfcfcf;border-right:none"></div><div class="a" style="left:634px;top:246px;width:975px;height:33px;background:#f1f1f1"></div><div class="a" style="left:634px;top:279px;width:975px;height:1px;background:#e0e0e0"></div><div class="a" style="left:0;top:0;width:1609px;height:775px;overflow:hidden"><div class="a" style="left:634px;top:300px;width:975px;height:1px;background:#e2e2e2"></div><div class="cb" style="left:640.0px;top:283.0px;width:14px;height:14px"></div><svg style="left:640.0px;top:283.0px" width="14" height="14" viewBox="0 0 14 14"><path d="M2.8 7.3L5.5 10.7L11 3.1" fill="none" stroke="#4a9fe8" stroke-width="1.6" stroke-linecap="round" stroke-linejoin="round"/></svg><div class="a" style="left:660px;top:280px;width:96px;height:21px;overflow:hidden"><div class="t" style="top:4px;left:3.0px;"><span class="d">66003</span></div></div><div class="a" style="left:757px;top:280px;width:66px;height:21px;overflow:hidden"><div class="t" style="top:4px;left:3.0px;"><span class="d">14</span></div></div><div class="a" style="left:824px;top:280px;width:186px;height:21px;overflow:hidden"><div class="t" style="top:4px;left:3.0px;letter-spacing:-0.33px;">АВОКАДО <span class="d">1</span>КГ</div></div><div class="a" style="left:1011px;top:280px;width:24px;height:21px;overflow:hidden"><div class="t" style="top:4px;left:3.0px;">кг.</div></div><div class="a" style="left:1036px;top:280px;width:48px;height:21px;overflow:hidden"><div class="t" style="top:4px;right:3.0px;"><span class="d">13</span>,<span class="d">146</span></div></div><div class="a" style="left:1085px;top:280px;width:66px;height:21px;overflow:hidden"><div class="t" style="top:4px;right:3.0px;"><span class="d">8</span>,<span class="d">146</span></div></div><div class="a" style="left:1152px;top:280px;width:312px;height:21px;overflow:hidden"><div class="t" style="top:4px;left:3.0px;letter-spacing:-0.03px;">Расценка № НД<span class="d">1256549</span> от <span class="d">2021</span>-<span class="d">06</span>-<span class="d">21</span></div></div><div class="a" style="left:1465px;top:280px;width:78px;height:21px;overflow:hidden"><div class="t" style="top:4px;right:3.0px;letter-spacing:-0.25px;"><span class="d">13</span>.<span class="d">07</span>.<span class="d">21</span> <span class="d">9</span>:<span class="d">31</span></div></div><div class="a" style="left:1544px;top:280px;width:65px;height:21px;overflow:hidden"><div class="t" style="top:4px;right:2.0px;"><span class="d">349</span>,<span class="d">99</span></div></div>
<div class="a" style="left:634px;top:321px;width:975px;height:1px;background:#e2e2e2"></div><div class="cb" style="left:640.0px;top:304.0px;width:14px;height:14px"></div><svg style="left:640.0px;top:304.0px" width="14" height="14" viewBox="0 0 14 14"><path d="M2.8 7.3L5.5 10.7L11 3.1" fill="none" stroke="#4a9fe8" stroke-width="1.6" stroke-linecap="round" stroke-linejoin="round"/></svg><div class="a" style="left:660px;top:301px;width:96px;height:21px;overflow:hidden"><div class="t" style="top:4px;left:3.0px;"><span class="d">4820008092946</span></div></div><div class="a" style="left:757px;top:301px;width:66px;height:21px;overflow:hidden"><div class="t" style="top:4px;left:3.0px;"><span class="d">46</span></div></div><div class="a" style="left:824px;top:301px;width:186px;height:21px;overflow:hidden"><div class="t" style="top:4px;left:3.0px;letter-spacing:-0.33px;">АДЖИКА ВЕРЕС ПО-ГРУЗИНСКИ <span class="d">200</span>Г</div></div><div class="a" style="left:1011px;top:301px;width:24px;height:21px;overflow:hidden"><div class="t" style="top:4px;left:3.0px;">шт</div></div><div class="a" style="left:1036px;top:301px;width:48px;height:21px;overflow:hidden"><div class="t" style="top:4px;right:3.0px;"><span class="d">30</span></div></div><div class="a" style="left:1085px;top:301px;width:66px;height:21px;overflow:hidden"><div class="t" style="top:4px;right:3.0px;"><span class="d">30</span></div></div><div class="a" style="left:1152px;top:301px;width:312px;height:21px;overflow:hidden"><div class="t" style="top:4px;left:3.0px;letter-spacing:-0.03px;">Акт расценки № РС<span class="d">00003</span> от <span class="d">2021</span>-<span class="d">06</span>-<span class="d">26</span></div></div><div class="a" style="left:1465px;top:301px;width:78px;height:21px;overflow:hidden"><div class="t" style="top:4px;right:3.0px;letter-spacing:-0.25px;"><span class="d">18</span>.<span class="d">07</span>.<span class="d">21</span> <span class="d">12</span>:<span class="d">12</span></div></div><div class="a" style="left:1544px;top:301px;width:65px;height:21px;overflow:hidden"><div class="t" style="top:4px;right:2.0px;"><span class="d">4</span>,<span class="d">45</span></div></div>
<div class="a" style="left:634px;top:342px;width:975px;height:1px;background:#e2e2e2"></div><div class="cb" style="left:640.0px;top:325.0px;width:14px;height:14px"></div><svg style="left:640.0px;top:325.0px" width="14" height="14" viewBox="0 0 14 14"><path d="M2.8 7.3L5.5 10.7L11 3.1" fill="none" stroke="#4a9fe8" stroke-width="1.6" stroke-linecap="round" stroke-linejoin="round"/></svg><div class="a" style="left:660px;top:322px;width:96px;height:21px;overflow:hidden"><div class="t" style="top:4px;left:3.0px;"><span class="d">66137</span></div></div><div class="a" style="left:757px;top:322px;width:66px;height:21px;overflow:hidden"><div class="t" style="top:4px;left:3.0px;"><span class="d">129</span></div></div><div class="a" style="left:824px;top:322px;width:186px;height:21px;overflow:hidden"><div class="t" style="top:4px;left:3.0px;letter-spacing:-0.33px;">АНАНАС БЕЙБИ <span class="d">1</span>КГ</div></div><div class="a" style="left:1011px;top:322px;width:24px;height:21px;overflow:hidden"><div class="t" style="top:4px;left:3.0px;">кг.</div></div><div class="a" style="left:1036px;top:322px;width:48px;height:21px;overflow:hidden"><div class="t" style="top:4px;right:3.0px;"><span class="d">10</span></div></div><div class="a" style="left:1085px;top:322px;width:66px;height:21px;overflow:hidden"><div class="t" style="top:4px;right:3.0px;"><span class="d">10</span></div></div><div class="a" style="left:1152px;top:322px;width:312px;height:21px;overflow:hidden"><div class="t" style="top:4px;left:3.0px;letter-spacing:-0.03px;">Акт переоценки (сортность) № УУ<span class="d">00032</span> от <span class="d">2021</span>-<span class="d">06</span>-<span class="d">22</span></div></div><div class="a" style="left:1465px;top:322px;width:78px;height:21px;overflow:hidden"><div class="t" style="top:4px;right:3.0px;letter-spacing:-0.25px;"><span class="d">14</span>.<span class="d">07</span>.<span class="d">21</span> <span class="d">11</span>:<span class="d">03</span></div></div><div class="a" style="left:1544px;top:322px;width:65px;height:21px;overflow:hidden"><div class="t" style="top:4px;right:2.0px;"><span class="d">2</span>,<span class="d">92</span></div></div>
<div class="a" style="left:634px;top:363px;width:975px;height:1px;background:#e2e2e2"></div><div class="cb" style="left:640.0px;top:346.0px;width:14px;height:14px"></div><svg style="left:640.0px;top:346.0px" width="14" height="14" viewBox="0 0 14 14"><path d="M2.8 7.3L5.5 10.7L11 3.1" fill="none" stroke="#4a9fe8" stroke-width="1.6" stroke-linecap="round" stroke-linejoin="round"/></svg><div class="a" style="left:660px;top:343px;width:96px;height:21px;overflow:hidden"><div class="t" style="top:4px;left:3.0px;"><span class="d">60722</span></div></div><div class="a" style="left:757px;top:343px;width:66px;height:21px;overflow:hidden"><div class="t" style="top:4px;left:3.0px;"><span class="d">461</span></div></div><div class="a" style="left:824px;top:343px;width:186px;height:21px;overflow:hidden"><div class="t" style="top:4px;left:3.0px;letter-spacing:-0.33px;">БАКЛАЖАН РБ <span class="d">1</span>КГ</div></div><div class="a" style="left:1011px;top:343px;width:24px;height:21px;overflow:hidden"><div class="t" style="top:4px;left:3.0px;">кг.</div></div><div class="a" style="left:1036px;top:343px;width:48px;height:21px;overflow:hidden"><div class="t" style="top:4px;right:3.0px;"><span class="d">10</span></div></div><div class="a" style="left:1085px;top:343px;width:66px;height:21px;overflow:hidden"><div class="t" style="top:4px;right:3.0px;"></div></div><div class="a" style="left:1152px;top:343px;width:312px;height:21px;overflow:hidden"><div class="t" style="top:4px;left:3.0px;letter-spacing:-0.03px;">Расценка № ИЖ<span class="d">5656546</span> от <span class="d">2021</span>-<span class="d">06</span>-<span class="d">21</span></div></div><div class="a" style="left:1465px;top:343px;width:78px;height:21px;overflow:hidden"><div class="t" style="top:4px;right:3.0px;letter-spacing:-0.25px;"><span class="d">13</span>.<span class="d">07</span>.<span class="d">21</span> <span class="d">21</span>:<span class="d">42</span></div></div><div class="a" style="left:1544px;top:343px;width:65px;height:21px;overflow:hidden"><div class="t" style="top:4px;right:2.0px;"><span class="d">2</span>,<span class="d">99</span></div></div>
<div class="a" style="left:634px;top:384px;width:975px;height:1px;background:#e2e2e2"></div><div class="cb" style="left:640.0px;top:367.0px;width:14px;height:14px"></div><svg style="left:640.0px;top:367.0px" width="14" height="14" viewBox="0 0 14 14"><path d="M2.8 7.3L5.5 10.7L11 3.1" fill="none" stroke="#4a9fe8" stroke-width="1.6" stroke-linecap="round" stroke-linejoin="round"/></svg><div class="a" style="left:660px;top:364px;width:96px;height:21px;overflow:hidden"><div class="t" style="top:4px;left:3.0px;"><span class="d">4812016000013</span></div></div><div class="a" style="left:757px;top:364px;width:66px;height:21px;overflow:hidden"><div class="t" style="top:4px;left:3.0px;"><span class="d">4811</span></div></div><div class="a" style="left:824px;top:364px;width:186px;height:21px;overflow:hidden"><div class="t" style="top:4px;left:3.0px;letter-spacing:-0.40px;">ГОРОШЕК ЗЕЛ.КОНС.СУПЕР! <span class="d">420</span>Г</div></div><div class="a" style="left:1011px;top:364px;width:24px;height:21px;overflow:hidden"><div class="t" style="top:4px;left:3.0px;">шт</div></div><div class="a" style="left:1036px;top:364px;width:48px;height:21px;overflow:hidden"><div class="t" style="top:4px;right:3.0px;"><span class="d">169</span></div></div><div class="a" style="left:1085px;top:364px;width:66px;height:21px;overflow:hidden"><div class="t" style="top:4px;right:3.0px;"><span class="d">157</span></div></div><div class="a" style="left:1152px;top:364px;width:312px;height:21px;overflow:hidden"><div class="t" style="top:4px;left:3.0px;letter-spacing:-0.03px;">Расценка № ПС<span class="d">0027866</span> от <span class="d">2021</span>-<span class="d">06</span>-<span class="d">26</span></div></div><div class="a" style="left:1465px;top:364px;width:78px;height:21px;overflow:hidden"><div class="t" style="top:4px;right:3.0px;letter-spacing:-0.25px;"><span class="d">18</span>.<span class="d">07</span>.<span class="d">21</span> <span class="d">15</span>:<span class="d">50</span></div></div><div class="a" style="left:1544px;top:364px;width:65px;height:21px;overflow:hidden"><div class="t" style="top:4px;right:2.0px;"><span class="d">2</span>,<span class="d">29</span></div></div>
<div class="a" style="left:634px;top:405px;width:975px;height:1px;background:#e2e2e2"></div><div class="cb" style="left:640.0px;top:388.0px;width:14px;height:14px"></div><svg style="left:640.0px;top:388.0px" width="14" height="14" viewBox="0 0 14 14"><path d="M2.8 7.3L5.5 10.7L11 3.1" fill="none" stroke="#4a9fe8" stroke-width="1.6" stroke-linecap="round" stroke-linejoin="round"/></svg><div class="a" style="left:660px;top:385px;width:96px;height:21px;overflow:hidden"><div class="t" style="top:4px;left:3.0px;"><span class="d">4811040118886</span></div></div><div class="a" style="left:757px;top:385px;width:66px;height:21px;overflow:hidden"><div class="t" style="top:4px;left:3.0px;"><span class="d">11077</span></div></div><div class="a" style="left:824px;top:385px;width:186px;height:21px;overflow:hidden"><div class="t" style="top:4px;left:3.0px;letter-spacing:-0.12px;">КОЛБАСА ВАР.МОРТАДЕЛЛА В/С</div></div><div class="a" style="left:1011px;top:385px;width:24px;height:21px;overflow:hidden"><div class="t" style="top:4px;left:3.0px;">шт</div></div><div class="a" style="left:1036px;top:385px;width:48px;height:21px;overflow:hidden"><div class="t" style="top:4px;right:3.0px;"><span class="d">5</span></div></div><div class="a" style="left:1085px;top:385px;width:66px;height:21px;overflow:hidden"><div class="t" style="top:4px;right:3.0px;"></div></div><div class="a" style="left:1152px;top:385px;width:312px;height:21px;overflow:hidden"><div class="t" style="top:4px;left:3.0px;letter-spacing:-0.03px;">Расценка № ПС<span class="d">1236541</span> от <span class="d">2021</span>-<span class="d">06</span>-<span class="d">22</span></div></div><div class="a" style="left:1465px;top:385px;width:78px;height:21px;overflow:hidden"><div class="t" style="top:4px;right:3.0px;letter-spacing:-0.25px;"><span class="d">14</span>.<span class="d">07</span>.<span class="d">21</span> <span class="d">11</span>:<span class="d">34</span></div></div><div class="a" style="left:1544px;top:385px;width:65px;height:21px;overflow:hidden"><div class="t" style="top:4px;right:2.0px;"><span class="d">63</span>,<span class="d">99</span></div></div>
<div class="a" style="left:634px;top:426px;width:975px;height:1px;background:#e2e2e2"></div><div class="cb" style="left:640.0px;top:409.0px;width:14px;height:14px"></div><svg style="left:640.0px;top:409.0px" width="14" height="14" viewBox="0 0 14 14"><path d="M2.8 7.3L5.5 10.7L11 3.1" fill="none" stroke="#4a9fe8" stroke-width="1.6" stroke-linecap="round" stroke-linejoin="round"/></svg><div class="a" style="left:660px;top:406px;width:96px;height:21px;overflow:hidden"><div class="t" style="top:4px;left:3.0px;"><span class="d">4810410038052</span></div></div><div class="a" style="left:757px;top:406px;width:66px;height:21px;overflow:hidden"><div class="t" style="top:4px;left:3.0px;"><span class="d">13164</span></div></div><div class="a" style="left:824px;top:406px;width:186px;height:21px;overflow:hidden"><div class="t" style="top:4px;left:3.0px;letter-spacing:-0.33px;">КОНФЕТЫ КРАСНАЯ ШАПОЧКА КГ</div></div><div class="a" style="left:1011px;top:406px;width:24px;height:21px;overflow:hidden"><div class="t" style="top:4px;left:3.0px;">шт</div></div><div class="a" style="left:1036px;top:406px;width:48px;height:21px;overflow:hidden"><div class="t" style="top:4px;right:3.0px;"><span class="d">28</span></div></div><div class="a" style="left:1085px;top:406px;width:66px;height:21px;overflow:hidden"><div class="t" style="top:4px;right:3.0px;"><span class="d">8</span></div></div><div class="a" style="left:1152px;top:406px;width:312px;height:21px;overflow:hidden"><div class="t" style="top:4px;left:3.0px;letter-spacing:-0.03px;">Расценка № ПС<span class="d">1236541</span> от <span class="d">2021</span>-<span class="d">06</span>-<span class="d">22</span></div></div><div class="a" style="left:1465px;top:406px;width:78px;height:21px;overflow:hidden"><div class="t" style="top:4px;right:3.0px;letter-spacing:-0.25px;"><span class="d">14</span>.<span class="d">07</span>.<span class="d">21</span> <span class="d">11</span>:<span class="d">34</span></div></div><div class="a" style="left:1544px;top:406px;width:65px;height:21px;overflow:hidden"><div class="t" style="top:4px;right:2.0px;"><span class="d">7</span>,<span class="d">89</span></div></div>
<div class="a" style="left:634px;top:447px;width:975px;height:1px;background:#e2e2e2"></div><div class="cb" style="left:640.0px;top:430.0px;width:14px;height:14px"></div><svg style="left:640.0px;top:430.0px" width="14" height="14" viewBox="0 0 14 14"><path d="M2.8 7.3L5.5 10.7L11 3.1" fill="none" stroke="#4a9fe8" stroke-width="1.6" stroke-linecap="round" stroke-linejoin="round"/></svg><div class="a" style="left:660px;top:427px;width:96px;height:21px;overflow:hidden"><div class="t" style="top:4px;left:3.0px;"><span class="d">4810410040376</span></div></div><div class="a" style="left:757px;top:427px;width:66px;height:21px;overflow:hidden"><div class="t" style="top:4px;left:3.0px;"><span class="d">13214</span></div></div><div class="a" style="left:824px;top:427px;width:186px;height:21px;overflow:hidden"><div class="t" style="top:4px;left:3.0px;letter-spacing:-0.33px;">КОНФЕТЫ МИШКА НА ПОЛЯНЕ КГ</div></div><div class="a" style="left:1011px;top:427px;width:24px;height:21px;overflow:hidden"><div class="t" style="top:4px;left:3.0px;">шт</div></div><div class="a" style="left:1036px;top:427px;width:48px;height:21px;overflow:hidden"><div class="t" style="top:4px;right:3.0px;"><span class="d">13</span></div></div><div class="a" style="left:1085px;top:427px;width:66px;height:21px;overflow:hidden"><div class="t" style="top:4px;right:3.0px;"><span class="d">3</span></div></div><div class="a" style="left:1152px;top:427px;width:312px;height:21px;overflow:hidden"><div class="t" style="top:4px;left:3.0px;letter-spacing:-0.03px;">Расценка № ПС<span class="d">1236541</span> от <span class="d">2021</span>-<span class="d">06</span>-<span class="d">22</span></div></div><div class="a" style="left:1465px;top:427px;width:78px;height:21px;overflow:hidden"><div class="t" style="top:4px;right:3.0px;letter-spacing:-0.25px;"><span class="d">14</span>.<span class="d">07</span>.<span class="d">21</span> <span class="d">11</span>:<span class="d">34</span></div></div><div class="a" style="left:1544px;top:427px;width:65px;height:21px;overflow:hidden"><div class="t" style="top:4px;right:2.0px;"><span class="d">4</span>,<span class="d">89</span></div></div>
<div class="a" style="left:634px;top:448px;width:975px;height:20px;background:#d3e4ea"></div><div class="a" style="left:634px;top:468px;width:975px;height:1px;background:#e2e2e2"></div><div class="cb" style="left:640.0px;top:451.0px;width:14px;height:14px"></div><svg style="left:640.0px;top:451.0px" width="14" height="14" viewBox="0 0 14 14"><path d="M2.8 7.3L5.5 10.7L11 3.1" fill="none" stroke="#4a9fe8" stroke-width="1.6" stroke-linecap="round" stroke-linejoin="round"/></svg><div class="a" style="left:660px;top:448px;width:96px;height:21px;overflow:hidden"><div class="t" style="top:4px;left:3.0px;"><span class="d">4810410053338</span></div></div><div class="a" style="left:757px;top:448px;width:66px;height:21px;overflow:hidden"><div class="t" style="top:4px;left:3.0px;"><span class="d">13227</span></div></div><div class="a" style="left:824px;top:448px;width:186px;height:21px;overflow:hidden"><div class="t" style="top:4px;left:3.0px;letter-spacing:-0.38px;">КОНФЕТЫ НЕЖНОЕ СУФЛЕ ВИШНЯ</div></div><div class="a" style="left:1011px;top:448px;width:24px;height:21px;overflow:hidden"><div class="t" style="top:4px;left:3.0px;">шт</div></div><div class="a" style="left:1036px;top:448px;width:48px;height:21px;overflow:hidden"><div class="t" style="top:4px;right:3.0px;"><span class="d">16</span></div></div><div class="a" style="left:1085px;top:448px;width:66px;height:21px;overflow:hidden"><div class="t" style="top:4px;right:3.0px;"></div></div><div class="a" style="left:1152px;top:448px;width:312px;height:21px;overflow:hidden"><div class="t" style="top:4px;left:3.0px;letter-spacing:-0.03px;">Расценка № ПС<span class="d">1236541</span> от <span class="d">2021</span>-<span class="d">06</span>-<span class="d">22</span></div></div><div class="a" style="left:1465px;top:448px;width:78px;height:21px;overflow:hidden"><div class="t" style="top:4px;right:3.0px;letter-spacing:-0.25px;"><span class="d">14</span>.<span class="d">07</span>.<span class="d">21</span> <span class="d">11</span>:<span class="d">34</span></div></div><div class="a" style="left:1544px;top:448px;width:65px;height:21px;overflow:hidden"><div class="t" style="top:4px;right:2.0px;"><span class="d">2</span>,<span class="d">89</span></div></div>
<div class="a" style="left:634px;top:489px;width:975px;height:1px;background:#e2e2e2"></div><div class="cb" style="left:640.0px;top:472.0px;width:14px;height:14px"></div><div class="a" style="left:660px;top:469px;width:96px;height:21px;overflow:hidden"><div class="t" style="top:4px;left:3.0px;"><span class="d">4810410038250</span></div></div><div class="a" style="left:757px;top:469px;width:66px;height:21px;overflow:hidden"><div class="t" style="top:4px;left:3.0px;"><span class="d">13348</span></div></div><div class="a" style="left:824px;top:469px;width:186px;height:21px;overflow:hidden"><div class="t" style="top:4px;left:3.0px;letter-spacing:-0.45px;">КОНФЕТЫ ТРЮФЕЛЬ КАПУЧИНО</div></div><div class="a" style="left:1011px;top:469px;width:24px;height:21px;overflow:hidden"><div class="t" style="top:4px;left:3.0px;">шт</div></div><div class="a" style="left:1036px;top:469px;width:48px;height:21px;overflow:hidden"><div class="t" style="top:4px;right:3.0px;"><span class="d">5</span></div></div><div class="a" style="left:1085px;top:469px;width:66px;height:21px;overflow:hidden"><div class="t" style="top:4px;right:3.0px;"></div></div><div class="a" style="left:1152px;top:469px;width:312px;height:21px;overflow:hidden"><div class="t" style="top:4px;left:3.0px;letter-spacing:-0.03px;">Расценка № ПС<span class="d">1236541</span> от <span class="d">2021</span>-<span class="d">06</span>-<span class="d">22</span></div></div><div class="a" style="left:1465px;top:469px;width:78px;height:21px;overflow:hidden"><div class="t" style="top:4px;right:3.0px;letter-spacing:-0.25px;"><span class="d">14</span>.<span class="d">07</span>.<span class="d">21</span> <span class="d">11</span>:<span class="d">34</span></div></div><div class="a" style="left:1544px;top:469px;width:65px;height:21px;overflow:hidden"><div class="t" style="top:4px;right:2.0px;"><span class="d">8</span>,<span class="d">49</span></div></div>
<div class="a" style="left:634px;top:510px;width:975px;height:1px;background:#e2e2e2"></div><div class="cb" style="left:640.0px;top:493.0px;width:14px;height:14px"></div><div class="a" style="left:660px;top:490px;width:96px;height:21px;overflow:hidden"><div class="t" style="top:4px;left:3.0px;"><span class="d">4605246004995</span></div></div><div class="a" style="left:757px;top:490px;width:66px;height:21px;overflow:hidden"><div class="t" style="top:4px;left:3.0px;"><span class="d">14032</span></div></div><div class="a" style="left:824px;top:490px;width:186px;height:21px;overflow:hidden"><div class="t" style="top:4px;left:3.0px;letter-spacing:-0.28px;">КОФЕ ЖОКЕЙ ИТАЛЬЯНО МОЛ <span class="d">250</span>Г</div></div><div class="a" style="left:1011px;top:490px;width:24px;height:21px;overflow:hidden"><div class="t" style="top:4px;left:3.0px;">шт</div></div><div class="a" style="left:1036px;top:490px;width:48px;height:21px;overflow:hidden"><div class="t" style="top:4px;right:3.0px;"><span class="d">43</span></div></div><div class="a" style="left:1085px;top:490px;width:66px;height:21px;overflow:hidden"><div class="t" style="top:4px;right:3.0px;"><span class="d">23</span></div></div><div class="a" style="left:1152px;top:490px;width:312px;height:21px;overflow:hidden"><div class="t" style="top:4px;left:3.0px;letter-spacing:-0.03px;">Расценка № ПС<span class="d">1234567</span> от <span class="d">2021</span>-<span class="d">06</span>-<span class="d">22</span></div></div><div class="a" style="left:1465px;top:490px;width:78px;height:21px;overflow:hidden"><div class="t" style="top:4px;right:3.0px;letter-spacing:-0.25px;"><span class="d">14</span>.<span class="d">07</span>.<span class="d">21</span> <span class="d">21</span>:<span class="d">00</span></div></div><div class="a" style="left:1544px;top:490px;width:65px;height:21px;overflow:hidden"><div class="t" style="top:4px;right:2.0px;"><span class="d">3</span>,<span class="d">99</span></div></div>
<div class="a" style="left:634px;top:531px;width:975px;height:1px;background:#e2e2e2"></div><div class="cb" style="left:640.0px;top:514.0px;width:14px;height:14px"></div><div class="a" style="left:660px;top:511px;width:96px;height:21px;overflow:hidden"><div class="t" style="top:4px;left:3.0px;"><span class="d">4605246004643</span></div></div><div class="a" style="left:757px;top:511px;width:66px;height:21px;overflow:hidden"><div class="t" style="top:4px;left:3.0px;"><span class="d">14033</span></div></div><div class="a" style="left:824px;top:511px;width:186px;height:21px;overflow:hidden"><div class="t" style="top:4px;left:3.0px;letter-spacing:-0.33px;">КОФЕ ЖОКЕЙ ИТАЛЬЯНО МОЛ. РАСТ</div></div><div class="a" style="left:1011px;top:511px;width:24px;height:21px;overflow:hidden"><div class="t" style="top:4px;left:3.0px;">шт</div></div><div class="a" style="left:1036px;top:511px;width:48px;height:21px;overflow:hidden"><div class="t" style="top:4px;right:3.0px;"><span class="d">13</span></div></div><div class="a" style="left:1085px;top:511px;width:66px;height:21px;overflow:hidden"><div class="t" style="top:4px;right:3.0px;"><span class="d">7</span></div></div><div class="a" style="left:1152px;top:511px;width:312px;height:21px;overflow:hidden"><div class="t" style="top:4px;left:3.0px;letter-spacing:-0.03px;">Расценка № ПС<span class="d">1234567</span> от <span class="d">2021</span>-<span class="d">06</span>-<span class="d">22</span></div></div><div class="a" style="left:1465px;top:511px;width:78px;height:21px;overflow:hidden"><div class="t" style="top:4px;right:3.0px;letter-spacing:-0.25px;"><span class="d">14</span>.<span class="d">07</span>.<span class="d">21</span> <span class="d">21</span>:<span class="d">00</span></div></div><div class="a" style="left:1544px;top:511px;width:65px;height:21px;overflow:hidden"><div class="t" style="top:4px;right:2.0px;"><span class="d">1</span>,<span class="d">59</span></div></div>
<div class="a" style="left:634px;top:552px;width:975px;height:1px;background:#e2e2e2"></div><div class="cb" style="left:640.0px;top:535.0px;width:14px;height:14px"></div><div class="a" style="left:660px;top:532px;width:96px;height:21px;overflow:hidden"><div class="t" style="top:4px;left:3.0px;"><span class="d">4605246002670</span></div></div><div class="a" style="left:757px;top:532px;width:66px;height:21px;overflow:hidden"><div class="t" style="top:4px;left:3.0px;"><span class="d">14039</span></div></div><div class="a" style="left:824px;top:532px;width:186px;height:21px;overflow:hidden"><div class="t" style="top:4px;left:3.0px;letter-spacing:-0.33px;">КОФЕ ЖОКЕЙ КЛАССИЧЕСКИЙ МОЛ</div></div><div class="a" style="left:1011px;top:532px;width:24px;height:21px;overflow:hidden"><div class="t" style="top:4px;left:3.0px;">шт</div></div><div class="a" style="left:1036px;top:532px;width:48px;height:21px;overflow:hidden"><div class="t" style="top:4px;right:3.0px;"><span class="d">18</span></div></div><div class="a" style="left:1085px;top:532px;width:66px;height:21px;overflow:hidden"><div class="t" style="top:4px;right:3.0px;"><span class="d">16</span></div></div><div class="a" style="left:1152px;top:532px;width:312px;height:21px;overflow:hidden"><div class="t" style="top:4px;left:3.0px;letter-spacing:-0.03px;">Расценка № ПС<span class="d">1234567</span> от <span class="d">2021</span>-<span class="d">06</span>-<span class="d">22</span></div></div><div class="a" style="left:1465px;top:532px;width:78px;height:21px;overflow:hidden"><div class="t" style="top:4px;right:3.0px;letter-spacing:-0.25px;"><span class="d">14</span>.<span class="d">07</span>.<span class="d">21</span> <span class="d">21</span>:<span class="d">00</span></div></div><div class="a" style="left:1544px;top:532px;width:65px;height:21px;overflow:hidden"><div class="t" style="top:4px;right:2.0px;"><span class="d">1</span>,<span class="d">69</span></div></div>
<div class="a" style="left:634px;top:573px;width:975px;height:1px;background:#e2e2e2"></div><div class="cb" style="left:640.0px;top:556.0px;width:14px;height:14px"></div><div class="a" style="left:660px;top:553px;width:96px;height:21px;overflow:hidden"><div class="t" style="top:4px;left:3.0px;"><span class="d">4605246002694</span></div></div><div class="a" style="left:757px;top:553px;width:66px;height:21px;overflow:hidden"><div class="t" style="top:4px;left:3.0px;"><span class="d">14042</span></div></div><div class="a" style="left:824px;top:553px;width:186px;height:21px;overflow:hidden"><div class="t" style="top:4px;left:3.0px;letter-spacing:-0.22px;">КОФЕ ЖОКЕЙ ПО-ВОСТОЧНОМУ МОЛ</div></div><div class="a" style="left:1011px;top:553px;width:24px;height:21px;overflow:hidden"><div class="t" style="top:4px;left:3.0px;">шт</div></div><div class="a" style="left:1036px;top:553px;width:48px;height:21px;overflow:hidden"><div class="t" style="top:4px;right:3.0px;"><span class="d">36</span></div></div><div class="a" style="left:1085px;top:553px;width:66px;height:21px;overflow:hidden"><div class="t" style="top:4px;right:3.0px;"><span class="d">9</span></div></div><div class="a" style="left:1152px;top:553px;width:312px;height:21px;overflow:hidden"><div class="t" style="top:4px;left:3.0px;letter-spacing:-0.03px;">Расценка № ПС<span class="d">1234567</span> от <span class="d">2021</span>-<span class="d">06</span>-<span class="d">22</span></div></div><div class="a" style="left:1465px;top:553px;width:78px;height:21px;overflow:hidden"><div class="t" style="top:4px;right:3.0px;letter-spacing:-0.25px;"><span class="d">14</span>.<span class="d">07</span>.<span class="d">21</span> <span class="d">21</span>:<span class="d">00</span></div></div><div class="a" style="left:1544px;top:553px;width:65px;height:21px;overflow:hidden"><div class="t" style="top:4px;right:2.0px;"><span class="d">1</span>,<span class="d">69</span></div></div>
<div class="a" style="left:634px;top:594px;width:975px;height:1px;background:#e2e2e2"></div><div class="cb" style="left:640.0px;top:577.0px;width:14px;height:14px"></div><div class="a" style="left:660px;top:574px;width:96px;height:21px;overflow:hidden"><div class="t" style="top:4px;left:3.0px;"><span class="d">60003</span></div></div><div class="a" style="left:757px;top:574px;width:66px;height:21px;overflow:hidden"><div class="t" style="top:4px;left:3.0px;"><span class="d">15882</span></div></div><div class="a" style="left:824px;top:574px;width:186px;height:21px;overflow:hidden"><div class="t" style="top:4px;left:3.0px;letter-spacing:-0.33px;">ЛУК РЕПЧАТЫЙ <span class="d">1</span>КГ</div></div><div class="a" style="left:1011px;top:574px;width:24px;height:21px;overflow:hidden"><div class="t" style="top:4px;left:3.0px;">кг.</div></div><div class="a" style="left:1036px;top:574px;width:48px;height:21px;overflow:hidden"><div class="t" style="top:4px;right:3.0px;"><span class="d">3</span></div></div><div class="a" style="left:1085px;top:574px;width:66px;height:21px;overflow:hidden"><div class="t" style="top:4px;right:3.0px;"></div></div><div class="a" style="left:1152px;top:574px;width:312px;height:21px;overflow:hidden"><div class="t" style="top:4px;left:3.0px;letter-spacing:-0.03px;">Расценка № ИЖ<span class="d">5656546</span> от <span class="d">2021</span>-<span class="d">06</span>-<span class="d">21</span></div></div><div class="a" style="left:1465px;top:574px;width:78px;height:21px;overflow:hidden"><div class="t" style="top:4px;right:3.0px;letter-spacing:-0.25px;"><span class="d">13</span>.<span class="d">07</span>.<span class="d">21</span> <span class="d">21</span>:<span class="d">42</span></div></div><div class="a" style="left:1544px;top:574px;width:65px;height:21px;overflow:hidden"><div class="t" style="top:4px;right:2.0px;"><span class="d">0</span>,<span class="d">89</span></div></div>
<div class="a" style="left:634px;top:615px;width:975px;height:1px;background:#e2e2e2"></div><div class="cb" style="left:640.0px;top:598.0px;width:14px;height:14px"></div><div class="a" style="left:660px;top:595px;width:96px;height:21px;overflow:hidden"><div class="t" style="top:4px;left:3.0px;"><span class="d">4811763001809</span></div></div><div class="a" style="left:757px;top:595px;width:66px;height:21px;overflow:hidden"><div class="t" style="top:4px;left:3.0px;"><span class="d">16802</span></div></div><div class="a" style="left:824px;top:595px;width:186px;height:21px;overflow:hidden"><div class="t" style="top:4px;left:3.0px;letter-spacing:-0.20px;">МАСЛО РАПС/ПОДС.СВЕТЛОЕ <span class="d">850</span></div></div><div class="a" style="left:1011px;top:595px;width:24px;height:21px;overflow:hidden"><div class="t" style="top:4px;left:3.0px;">шт</div></div><div class="a" style="left:1036px;top:595px;width:48px;height:21px;overflow:hidden"><div class="t" style="top:4px;right:3.0px;"><span class="d">11</span></div></div><div class="a" style="left:1085px;top:595px;width:66px;height:21px;overflow:hidden"><div class="t" style="top:4px;right:3.0px;"><span class="d">11</span></div></div><div class="a" style="left:1152px;top:595px;width:312px;height:21px;overflow:hidden"><div class="t" style="top:4px;left:3.0px;letter-spacing:-0.03px;">Акт переоценки № ПО<span class="d">00427</span> от <span class="d">2021</span>-<span class="d">06</span>-<span class="d">25</span></div></div><div class="a" style="left:1465px;top:595px;width:78px;height:21px;overflow:hidden"><div class="t" style="top:4px;right:3.0px;letter-spacing:-0.25px;"><span class="d">17</span>.<span class="d">07</span>.<span class="d">21</span> <span class="d">16</span>:<span class="d">52</span></div></div><div class="a" style="left:1544px;top:595px;width:65px;height:21px;overflow:hidden"><div class="t" style="top:4px;right:2.0px;"><span class="d">2</span>,<span class="d">62</span></div></div>
<div class="a" style="left:634px;top:636px;width:975px;height:1px;background:#e2e2e2"></div><div class="cb" style="left:640.0px;top:619.0px;width:14px;height:14px"></div><div class="a" style="left:660px;top:616px;width:96px;height:21px;overflow:hidden"><div class="t" style="top:4px;left:3.0px;"><span class="d">4810268024191</span></div></div><div class="a" style="left:757px;top:616px;width:66px;height:21px;overflow:hidden"><div class="t" style="top:4px;left:3.0px;"><span class="d">16810</span></div></div><div class="a" style="left:824px;top:616px;width:186px;height:21px;overflow:hidden"><div class="t" style="top:4px;left:3.0px;letter-spacing:-0.12px;">МАСЛО САВУШКИН СЛ/СЛ.НЕСОЛ</div></div><div class="a" style="left:1011px;top:616px;width:24px;height:21px;overflow:hidden"><div class="t" style="top:4px;left:3.0px;">шт</div></div><div class="a" style="left:1036px;top:616px;width:48px;height:21px;overflow:hidden"><div class="t" style="top:4px;right:3.0px;"><span class="d">24</span></div></div><div class="a" style="left:1085px;top:616px;width:66px;height:21px;overflow:hidden"><div class="t" style="top:4px;right:3.0px;"><span class="d">24</span></div></div><div class="a" style="left:1152px;top:616px;width:312px;height:21px;overflow:hidden"><div class="t" style="top:4px;left:3.0px;letter-spacing:-0.03px;">Акт переоценки № ПО<span class="d">00427</span> от <span class="d">2021</span>-<span class="d">06</span>-<span class="d">25</span></div></div><div class="a" style="left:1465px;top:616px;width:78px;height:21px;overflow:hidden"><div class="t" style="top:4px;right:3.0px;letter-spacing:-0.25px;"><span class="d">17</span>.<span class="d">07</span>.<span class="d">21</span> <span class="d">16</span>:<span class="d">52</span></div></div><div class="a" style="left:1544px;top:616px;width:65px;height:21px;overflow:hidden"><div class="t" style="top:4px;right:2.0px;"><span class="d">2</span>,<span class="d">86</span></div></div>
<div class="a" style="left:634px;top:657px;width:975px;height:1px;background:#e2e2e2"></div><div class="cb" style="left:640.0px;top:640.0px;width:14px;height:14px"></div><div class="a" style="left:660px;top:637px;width:96px;height:21px;overflow:hidden"><div class="t" style="top:4px;left:3.0px;"><span class="d">4810268024207</span></div></div><div class="a" style="left:757px;top:637px;width:66px;height:21px;overflow:hidden"><div class="t" style="top:4px;left:3.0px;"><span class="d">16809</span></div></div><div class="a" style="left:824px;top:637px;width:186px;height:21px;overflow:hidden"><div class="t" style="top:4px;left:3.0px;letter-spacing:-0.20px;">МАСЛО САВУШКИН СЛ/СЛИВ.<span class="d">72</span>.<span class="d">5</span></div></div><div class="a" style="left:1011px;top:637px;width:24px;height:21px;overflow:hidden"><div class="t" style="top:4px;left:3.0px;">шт</div></div><div class="a" style="left:1036px;top:637px;width:48px;height:21px;overflow:hidden"><div class="t" style="top:4px;right:3.0px;"><span class="d">31</span></div></div><div class="a" style="left:1085px;top:637px;width:66px;height:21px;overflow:hidden"><div class="t" style="top:4px;right:3.0px;"><span class="d">31</span></div></div><div class="a" style="left:1152px;top:637px;width:312px;height:21px;overflow:hidden"><div class="t" style="top:4px;left:3.0px;letter-spacing:-0.03px;">Акт переоценки № ПО<span class="d">00427</span> от <span class="d">2021</span>-<span class="d">06</span>-<span class="d">25</span></div></div><div class="a" style="left:1465px;top:637px;width:78px;height:21px;overflow:hidden"><div class="t" style="top:4px;right:3.0px;letter-spacing:-0.25px;"><span class="d">17</span>.<span class="d">07</span>.<span class="d">21</span> <span class="d">16</span>:<span class="d">52</span></div></div><div class="a" style="left:1544px;top:637px;width:65px;height:21px;overflow:hidden"><div class="t" style="top:4px;right:2.0px;"><span class="d">2</span>,<span class="d">67</span></div></div>
<div class="a" style="left:634px;top:678px;width:975px;height:1px;background:#e2e2e2"></div><div class="cb" style="left:640.0px;top:661.0px;width:14px;height:14px"></div><div class="a" style="left:660px;top:658px;width:96px;height:21px;overflow:hidden"><div class="t" style="top:4px;left:3.0px;"><span class="d">4620001090754</span></div></div><div class="a" style="left:757px;top:658px;width:66px;height:21px;overflow:hidden"><div class="t" style="top:4px;left:3.0px;"><span class="d">16863</span></div></div><div class="a" style="left:824px;top:658px;width:186px;height:21px;overflow:hidden"><div class="t" style="top:4px;left:3.0px;letter-spacing:-0.33px;">МАСЛО ТЫКВЕННОЕ РФ <span class="d">0</span>.<span class="d">25</span>Л НАТ</div></div><div class="a" style="left:1011px;top:658px;width:24px;height:21px;overflow:hidden"><div class="t" style="top:4px;left:3.0px;">шт</div></div><div class="a" style="left:1036px;top:658px;width:48px;height:21px;overflow:hidden"><div class="t" style="top:4px;right:3.0px;"><span class="d">3</span></div></div><div class="a" style="left:1085px;top:658px;width:66px;height:21px;overflow:hidden"><div class="t" style="top:4px;right:3.0px;"><span class="d">3</span></div></div><div class="a" style="left:1152px;top:658px;width:312px;height:21px;overflow:hidden"><div class="t" style="top:4px;left:3.0px;letter-spacing:-0.03px;">Акт переоценки № ПО<span class="d">00427</span> от <span class="d">2021</span>-<span class="d">06</span>-<span class="d">25</span></div></div><div class="a" style="left:1465px;top:658px;width:78px;height:21px;overflow:hidden"><div class="t" style="top:4px;right:3.0px;letter-spacing:-0.25px;"><span class="d">17</span>.<span class="d">07</span>.<span class="d">21</span> <span class="d">16</span>:<span class="d">52</span></div></div><div class="a" style="left:1544px;top:658px;width:65px;height:21px;overflow:hidden"><div class="t" style="top:4px;right:2.0px;"><span class="d">9</span>,<span class="d">34</span></div></div>
<div class="a" style="left:634px;top:699px;width:975px;height:1px;background:#e2e2e2"></div><div class="cb" style="left:640.0px;top:682.0px;width:14px;height:14px"></div><div class="a" style="left:660px;top:679px;width:96px;height:21px;overflow:hidden"><div class="t" style="top:4px;left:3.0px;"><span class="d">4810268022463</span></div></div><div class="a" style="left:757px;top:679px;width:66px;height:21px;overflow:hidden"><div class="t" style="top:4px;left:3.0px;"><span class="d">17324</span></div></div><div class="a" style="left:824px;top:679px;width:186px;height:21px;overflow:hidden"><div class="t" style="top:4px;left:3.0px;letter-spacing:-0.20px;">МОЛОКО ПИТ.УЛЬТРАП.<span class="d">1</span>.<span class="d">5</span>% ПЭТ</div></div><div class="a" style="left:1011px;top:679px;width:24px;height:21px;overflow:hidden"><div class="t" style="top:4px;left:3.0px;">шт</div></div><div class="a" style="left:1036px;top:679px;width:48px;height:21px;overflow:hidden"><div class="t" style="top:4px;right:3.0px;"><span class="d">79</span></div></div><div class="a" style="left:1085px;top:679px;width:66px;height:21px;overflow:hidden"><div class="t" style="top:4px;right:3.0px;"><span class="d">79</span></div></div><div class="a" style="left:1152px;top:679px;width:312px;height:21px;overflow:hidden"><div class="t" style="top:4px;left:3.0px;letter-spacing:-0.03px;">Акт переоценки № <span class="d">1</span> от <span class="d">2021</span>-<span class="d">06</span>-<span class="d">26</span></div></div><div class="a" style="left:1465px;top:679px;width:78px;height:21px;overflow:hidden"><div class="t" style="top:4px;right:3.0px;letter-spacing:-0.25px;"><span class="d">18</span>.<span class="d">07</span>.<span class="d">21</span> <span class="d">13</span>:<span class="d">12</span></div></div><div class="a" style="left:1544px;top:679px;width:65px;height:21px;overflow:hidden"><div class="t" style="top:4px;right:2.0px;"><span class="d">1</span>,<span class="d">39</span></div></div>
<div class="a" style="left:634px;top:720px;width:975px;height:1px;background:#e2e2e2"></div><div class="cb" style="left:640.0px;top:703.0px;width:14px;height:14px"></div><div class="a" style="left:660px;top:700px;width:96px;height:21px;overflow:hidden"><div class="t" style="top:4px;left:3.0px;"><span class="d">67327</span></div></div><div class="a" style="left:757px;top:700px;width:66px;height:21px;overflow:hidden"><div class="t" style="top:4px;left:3.0px;"><span class="d">17582</span></div></div><div class="a" style="left:824px;top:700px;width:186px;height:21px;overflow:hidden"><div class="t" style="top:4px;left:3.0px;letter-spacing:-0.33px;">МОРКОВЬ ФАС. РБ <span class="d">1</span>КГ</div></div><div class="a" style="left:1011px;top:700px;width:24px;height:21px;overflow:hidden"><div class="t" style="top:4px;left:3.0px;">кг.</div></div><div class="a" style="left:1036px;top:700px;width:48px;height:21px;overflow:hidden"><div class="t" style="top:4px;right:3.0px;"><span class="d">4</span></div></div><div class="a" style="left:1085px;top:700px;width:66px;height:21px;overflow:hidden"><div class="t" style="top:4px;right:3.0px;"></div></div><div class="a" style="left:1152px;top:700px;width:312px;height:21px;overflow:hidden"><div class="t" style="top:4px;left:3.0px;letter-spacing:-0.03px;">Расценка № ИЖ<span class="d">5656546</span> от <span class="d">2021</span>-<span class="d">06</span>-<span class="d">21</span></div></div><div class="a" style="left:1465px;top:700px;width:78px;height:21px;overflow:hidden"><div class="t" style="top:4px;right:3.0px;letter-spacing:-0.25px;"><span class="d">13</span>.<span class="d">07</span>.<span class="d">21</span> <span class="d">21</span>:<span class="d">42</span></div></div><div class="a" style="left:1544px;top:700px;width:65px;height:21px;overflow:hidden"><div class="t" style="top:4px;right:2.0px;"><span class="d">0</span>,<span class="d">69</span></div></div>
<div class="a" style="left:634px;top:741px;width:975px;height:1px;background:#e2e2e2"></div><div class="cb" style="left:640.0px;top:724.0px;width:14px;height:14px"></div><div class="a" style="left:660px;top:721px;width:96px;height:21px;overflow:hidden"><div class="t" style="top:4px;left:3.0px;"><span class="d">64480</span></div></div><div class="a" style="left:757px;top:721px;width:66px;height:21px;overflow:hidden"><div class="t" style="top:4px;left:3.0px;"><span class="d">21719</span></div></div><div class="a" style="left:824px;top:721px;width:186px;height:21px;overflow:hidden"><div class="t" style="top:4px;left:3.0px;letter-spacing:-0.33px;">ОГУРЕЦ КОЛЮЧИЙ <span class="d">1</span>КГ</div></div><div class="a" style="left:1011px;top:721px;width:24px;height:21px;overflow:hidden"><div class="t" style="top:4px;left:3.0px;">кг.</div></div><div class="a" style="left:1036px;top:721px;width:48px;height:21px;overflow:hidden"><div class="t" style="top:4px;right:3.0px;"><span class="d">5</span></div></div><div class="a" style="left:1085px;top:721px;width:66px;height:21px;overflow:hidden"><div class="t" style="top:4px;right:3.0px;"></div></div><div class="a" style="left:1152px;top:721px;width:312px;height:21px;overflow:hidden"><div class="t" style="top:4px;left:3.0px;letter-spacing:-0.03px;">Расценка № ИЖ<span class="d">5656546</span> от <span class="d">2021</span>-<span class="d">06</span>-<span class="d">21</span></div></div><div class="a" style="left:1465px;top:721px;width:78px;height:21px;overflow:hidden"><div class="t" style="top:4px;right:3.0px;letter-spacing:-0.25px;"><span class="d">13</span>.<span class="d">07</span>.<span class="d">21</span> <span class="d">21</span>:<span class="d">42</span></div></div><div class="a" style="left:1544px;top:721px;width:65px;height:21px;overflow:hidden"><div class="t" style="top:4px;right:2.0px;"><span class="d">1</span>,<span class="d">29</span></div></div>
<div class="a" style="left:634px;top:762px;width:975px;height:1px;background:#e2e2e2"></div><div class="cb" style="left:640.0px;top:745.0px;width:14px;height:14px"></div><div class="a" style="left:660px;top:742px;width:96px;height:21px;overflow:hidden"><div class="t" style="top:4px;left:3.0px;"><span class="d">64820</span></div></div><div class="a" style="left:757px;top:742px;width:66px;height:21px;overflow:hidden"><div class="t" style="top:4px;left:3.0px;"><span class="d">27674</span></div></div><div class="a" style="left:824px;top:742px;width:186px;height:21px;overflow:hidden"><div class="t" style="top:4px;left:3.0px;letter-spacing:-0.33px;">РЕДИС ДАЙКОН <span class="d">1</span>КГ</div></div><div class="a" style="left:1011px;top:742px;width:24px;height:21px;overflow:hidden"><div class="t" style="top:4px;left:3.0px;">кг.</div></div><div class="a" style="left:1036px;top:742px;width:48px;height:21px;overflow:hidden"><div class="t" style="top:4px;right:3.0px;"><span class="d">8</span></div></div><div class="a" style="left:1085px;top:742px;width:66px;height:21px;overflow:hidden"><div class="t" style="top:4px;right:3.0px;"></div></div><div class="a" style="left:1152px;top:742px;width:312px;height:21px;overflow:hidden"><div class="t" style="top:4px;left:3.0px;letter-spacing:-0.03px;">Расценка № ИЖ<span class="d">5656546</span> от <span class="d">2021</span>-<span class="d">06</span>-<span class="d">21</span></div></div><div class="a" style="left:1465px;top:742px;width:78px;height:21px;overflow:hidden"><div class="t" style="top:4px;right:3.0px;letter-spacing:-0.25px;"><span class="d">13</span>.<span class="d">07</span>.<span class="d">21</span> <span class="d">21</span>:<span class="d">42</span></div></div><div class="a" style="left:1544px;top:742px;width:65px;height:21px;overflow:hidden"><div class="t" style="top:4px;right:2.0px;"><span class="d">1</span>,<span class="d">99</span></div></div>
<div class="a" style="left:634px;top:783px;width:975px;height:1px;background:#e2e2e2"></div><div class="cb" style="left:640.0px;top:766.0px;width:14px;height:14px"></div><div class="a" style="left:660px;top:763px;width:96px;height:21px;overflow:hidden"><div class="t" style="top:4px;left:3.0px;"><span class="d">4820135583577</span></div></div><div class="a" style="left:757px;top:763px;width:66px;height:21px;overflow:hidden"><div class="t" style="top:4px;left:3.0px;"></div></div><div class="a" style="left:824px;top:763px;width:186px;height:21px;overflow:hidden"><div class="t" style="top:4px;left:3.0px;letter-spacing:-0.47px;">СОК ЯБЛОЧНЫЙ ОСВЕТЛ. <span class="d">3</span>л BRAVO</div></div><div class="a" style="left:1011px;top:763px;width:24px;height:21px;overflow:hidden"><div class="t" style="top:4px;left:3.0px;">шт</div></div><div class="a" style="left:1036px;top:763px;width:48px;height:21px;overflow:hidden"><div class="t" style="top:4px;right:3.0px;"><span class="d">8</span></div></div><div class="a" style="left:1085px;top:763px;width:66px;height:21px;overflow:hidden"><div class="t" style="top:4px;right:3.0px;">-<span class="d">2</span></div></div><div class="a" style="left:1152px;top:763px;width:312px;height:21px;overflow:hidden"><div class="t" style="top:4px;left:3.0px;letter-spacing:-0.03px;">Расценка № ПС<span class="d">1100280</span> от <span class="d">2021</span>-<span class="d">06</span>-<span class="d">21</span></div></div><div class="a" style="left:1465px;top:763px;width:78px;height:21px;overflow:hidden"><div class="t" style="top:4px;right:3.0px;letter-spacing:-0.25px;"><span class="d">13</span>.<span class="d">07</span>.<span class="d">21</span> <span class="d">10</span>:<span class="d">39</span></div></div><div class="a" style="left:1544px;top:763px;width:65px;height:21px;overflow:hidden"><div class="t" style="top:4px;right:2.0px;"><span class="d">5</span>,<span class="d">89</span></div></div>
<div class="a" style="left:659px;top:246px;width:1px;height:529px;background:#e4e4e4;mix-blend-mode:multiply"></div><div class="a" style="left:756px;top:246px;width:1px;height:529px;background:#e4e4e4;mix-blend-mode:multiply"></div><div class="a" style="left:823px;top:246px;width:1px;height:529px;background:#e4e4e4;mix-blend-mode:multiply"></div><div class="a" style="left:1010px;top:246px;width:1px;height:529px;background:#e4e4e4;mix-blend-mode:multiply"></div><div class="a" style="left:1035px;top:246px;width:1px;height:529px;background:#e4e4e4;mix-blend-mode:multiply"></div><div class="a" style="left:1084px;top:246px;width:1px;height:529px;background:#e4e4e4;mix-blend-mode:multiply"></div><div class="a" style="left:1151px;top:246px;width:1px;height:529px;background:#e4e4e4;mix-blend-mode:multiply"></div><div class="a" style="left:1464px;top:246px;width:1px;height:529px;background:#e4e4e4;mix-blend-mode:multiply"></div><div class="a" style="left:1543px;top:246px;width:1px;height:529px;background:#e4e4e4;mix-blend-mode:multiply"></div></div>
<div class="a" style="left:635px;top:246px;width:24px;height:33px;overflow:hidden"><div class="t" style="left:2.5px;top:4px">Отм</div></div><svg style="left:655px;top:275px" width="4" height="4" viewBox="0 0 4 4"><path d="M4 0V4H0Z" fill="#1a86c8"/></svg><div class="a" style="left:660px;top:246px;width:96px;height:33px;overflow:hidden"><div class="t" style="left:0;top:4px;width:96px;text-align:center;letter-spacing:0.07px">Штрихкод</div></div><div class="a" style="left:757px;top:246px;width:66px;height:33px;overflow:hidden"><div class="t" style="left:0;top:4px;width:66px;text-align:center">Код</div></div><svg style="left:867.8px;top:250.5px" width="12" height="12" viewBox="0 0 12 12"><circle cx="6" cy="6" r="4.9" fill="#fff" stroke="#4cbcec" stroke-width="1.3"/><path d="M3.7 7.2L6 4.8L8.3 7.2" fill="none" stroke="#3b3b3b" stroke-width="1.2" stroke-linecap="round" stroke-linejoin="round"/></svg><div class="t" style="left:884.3px;top:250px;letter-spacing:-0.06px">Наименование</div><div class="a" style="left:1011px;top:246px;width:24px;height:33px;overflow:hidden"><div class="t" style="left:3px;top:4px">Ед.</div><div class="t" style="left:3px;top:20px">изм</div></div><div class="a" style="left:1036px;top:246px;width:48px;height:33px;overflow:hidden"><div class="t" style="left:3px;top:4px">Текущий</div><div class="t" style="left:5.5px;top:20px">остаток</div></div><div class="a" style="left:1085px;top:246px;width:66px;height:33px;overflow:hidden"><div class="t" style="left:3px;top:4px;letter-spacing:-0.17px">Остаток до</div></div><div class="a" style="left:1152px;top:246px;width:312px;height:33px;overflow:hidden"><div class="t" style="left:0;top:4px;width:312px;text-align:center">Описание</div></div><div class="a" style="left:1465px;top:246px;width:78px;height:33px;overflow:hidden"><div class="t" style="left:3px;top:4px;letter-spacing:-0.08px">Дата/время с</div></div><div class="a" style="left:1544px;top:246px;width:65px;height:33px;overflow:hidden"><div class="t" style="left:3px;top:4px;letter-spacing:-0.07px">Розничная</div><div class="t" style="left:6.5px;top:20px">цена</div></div>
<div class="a" style="left:1609px;top:246px;width:11px;height:529px;background:#f7f7f7"></div><div class="a" style="left:1609px;top:246px;width:11px;height:365px;background:#d9d9d9"></div><div class="a" style="left:634px;top:775px;width:986px;height:10px;background:#f4f4f4"></div><div class="a" style="left:634px;top:775px;width:805px;height:10px;background:#dadada"></div>
<svg style="left:638px;top:791px" width="16" height="16" viewBox="0 0 16 16"><rect x="0.7" y="0.7" width="14.6" height="14.6" fill="none" stroke="#222" stroke-width="1.05"/><path d="M5.6 1.2V14.8M10.4 1.2V14.8M1.2 5.6H14.8M1.2 10.4H14.8" stroke="#4cbcec" stroke-width="1.05" fill="none"/></svg><div class="a" style="left:660px;top:788px;width:1px;height:22px;background:#d2d2d2"></div><svg style="left:667px;top:793px" width="16" height="13" viewBox="0 0 16 13"><path d="M0 0.5H15.7M4 8.5H11.8" stroke="#222" stroke-width="1" fill="none"/><path d="M2.2 4.5H13.9M6 12.5H10" stroke="#4cbcec" stroke-width="1" fill="none"/></svg><svg style="left:689px;top:791px" width="16" height="16" viewBox="0 0 16 16"><path d="M13.53 8.88L15.14 9.95L14.43 11.67L12.53 11.29L11.29 12.53L11.67 14.43L9.95 15.14L8.88 13.53L7.12 13.53L6.05 15.14L4.33 14.43L4.71 12.53L3.47 11.29L1.57 11.67L0.86 9.95L2.47 8.88L2.47 7.12L0.86 6.05L1.57 4.33L3.47 4.71L4.71 3.47L4.33 1.57L6.05 0.86L7.12 2.47L8.88 2.47L9.95 0.86L11.67 1.57L11.29 3.47L12.53 4.71L14.43 4.33L15.14 6.05L13.53 7.12Z" fill="none" stroke="#333" stroke-width="1.05" stroke-linejoin="round"/><circle cx="8" cy="8" r="2.5" fill="none" stroke="#4cbcec" stroke-width="1.05"/></svg><div class="a" style="left:711px;top:788px;width:1px;height:22px;background:#d2d2d2"></div><svg style="left:718px;top:791px" width="16" height="16" viewBox="0 0 16 16"><path d="M6 2.2H15.4M6 8H15.4M6 13.8H15.4" stroke="#222" stroke-width="1.05" fill="none"/><path d="M1 1.4L2 0.8V4M0.8 6.6Q2.6 5.8 2.4 7.4L0.8 9.6H2.8M0.8 12Q2.8 11.6 2.4 13Q2.4 13.6 1.4 13.6Q2.8 13.8 2.4 15Q2 15.8 0.8 15.4" stroke="#4cbcec" stroke-width="1" fill="none"/></svg><svg style="left:740px;top:791px" width="16" height="16" viewBox="0 0 16 16"><path d="M0.6 2H15.4M0.6 6.2H15.4M0.6 10.4H8.6M0.6 14.4H8.6" stroke="#222" stroke-width="1.05" fill="none"/><path d="M10.4 12.4H15.6M13 9.8V15" stroke="#4cbcec" stroke-width="1.05" fill="none"/></svg><div class="a" style="left:762px;top:788px;width:1px;height:22px;background:#d2d2d2"></div><svg style="left:769px;top:791px" width="17" height="16" viewBox="0 0 17 16"><path d="M7.6 3.2H1.8Q0.8 3.2 0.8 4.2V14.2Q0.8 15.2 1.8 15.2H11.6Q12.6 15.2 12.6 14.2V9" fill="none" stroke="#333" stroke-width="1.2" stroke-linecap="round"/><path d="M6.8 9.4L15.6 0.8M10.4 0.8H15.8V6.2" fill="none" stroke="#4cbcec" stroke-width="1.05" stroke-linecap="round" stroke-linejoin="round"/></svg><div class="a" style="left:791px;top:788px;width:1px;height:22px;background:#d2d2d2"></div><svg style="left:798px;top:791.5px" width="16.4" height="14.8" viewBox="0 0 18 18" preserveAspectRatio="none"><path d="M0.8 11V3.6H9.4M7 0.8L10 3.6L7 6.4" fill="none" stroke="#333" stroke-width="1.05" stroke-linejoin="round" stroke-linecap="round"/><path d="M13.2 3.6H16.8V14.2H4.4M7.2 11.4L4.2 14.2L7.2 17" fill="none" stroke="#4cbcec" stroke-width="1.05" stroke-linejoin="round" stroke-linecap="round"/></svg>
<div class="btn" style="left:906px;top:788px;width:162px;height:22px"></div><div class="t" style="left:913.5px;top:793px;letter-spacing:-0.10px">Ценники и оборуд. (F9)</div><svg style="left:1052px;top:795px" width="11" height="7" viewBox="0 0 11 7"><path d="M0.8 0.8L5.5 5.8L10.2 0.8" fill="none" stroke="#444" stroke-width="1.1"/></svg><div class="btn" style="left:1072px;top:788px;width:147px;height:22px;line-height:20px;color:#000;padding-top:1px;letter-spacing:-0.08px">Распечатать ценники</div><div class="btn" style="left:1223px;top:788px;width:156px;height:22px;line-height:20px;color:#000;padding-top:1px;letter-spacing:-0.06px">Перепечатать ценники</div><div class="btn" style="left:1383px;top:788px;width:175px;height:22px;line-height:20px;color:#000;padding-top:1px;letter-spacing:-0.07px">Загрузить в оборудование</div><div class="t" style="left:1562px;top:793.5px">Отм.</div><div class="a" style="left:1592px;top:788px;width:27px;height:22px;background:#fff;border:1px solid #d6d6d6"></div><div class="t" style="left:1592px;top:793.5px;width:23px;text-align:right">9</div>
<div class="btn" style="left:1220px;top:819px;width:18px;height:22px"></div><svg style="left:1222px;top:823px" width="14" height="14" viewBox="0 0 14 14"><path d="M1 6.4Q1.4 2.6 5.4 1.8Q9.4 1.2 11.6 4.2M11.8 1V4.4H8.4" fill="none" stroke="#333" stroke-width="1.3" stroke-linecap="round" stroke-linejoin="round"/><path d="M13 7.6Q12.6 11.4 8.6 12.2Q4.6 12.8 2.4 9.8M2.2 13V9.6H5.6" fill="none" stroke="#4cbcec" stroke-width="1.3" stroke-linecap="round" stroke-linejoin="round"/></svg><div class="btn" style="left:1242px;top:819px;width:105px;height:22px;background:#f1f1f1"></div><svg style="left:1257px;top:824px" width="12" height="12" viewBox="0 0 12 12"><path d="M2.4 0.7H8.6L11.3 3.2V9.6Q11.3 11.3 9.6 11.3H2.4Q0.7 11.3 0.7 9.6V2.4Q0.7 0.7 2.4 0.7Z" fill="none" stroke="#b4b4b4" stroke-width="1.1"/><path d="M1 6.6H11M2.6 11V6.8M9.4 11V6.8" stroke="#b4b4b4" stroke-width="1.1" fill="none"/></svg><div class="t" style="left:1273.5px;top:823.5px;color:#9d9d9d;letter-spacing:-0.13px">Сохранить</div><div class="btn" style="left:1351px;top:819px;width:100px;height:22px;background:#f1f1f1"></div><svg style="left:1367px;top:823px" width="10" height="13" viewBox="0 0 10 13"><path d="M0.4 2.6H9.6M3.4 2.4V0.8H6.6V2.4M1.4 2.8V11.4Q1.4 12.2 2.2 12.2H7.8Q8.6 12.2 8.6 11.4V2.8" fill="none" stroke="#b4b4b4" stroke-width="1"/></svg><div class="t" style="left:1381.5px;top:823.5px;color:#9d9d9d;letter-spacing:-0.08px">Отменить</div><div class="btn" style="left:1455px;top:819px;width:72px;height:22px"></div><svg style="left:1474px;top:824px" width="14" height="11" viewBox="0 0 14 11"><path d="M0.8 6.4L4.4 10L13 0.8" fill="none" stroke="#222" stroke-width="1.3"/></svg><div class="t" style="left:1491px;top:823.5px">OK</div><div class="btn" style="left:1531px;top:819px;width:92px;height:22px"></div><svg style="left:1546px;top:825px" width="11" height="11" viewBox="0 0 11 11"><path d="M0.6 0.6L10.4 10.4M10.4 0.6L0.6 10.4" fill="none" stroke="#222" stroke-width="1.3"/></svg><div class="t" style="left:1562px;top:823.5px;letter-spacing:-0.10px">Закрыть</div>
</body></html>
